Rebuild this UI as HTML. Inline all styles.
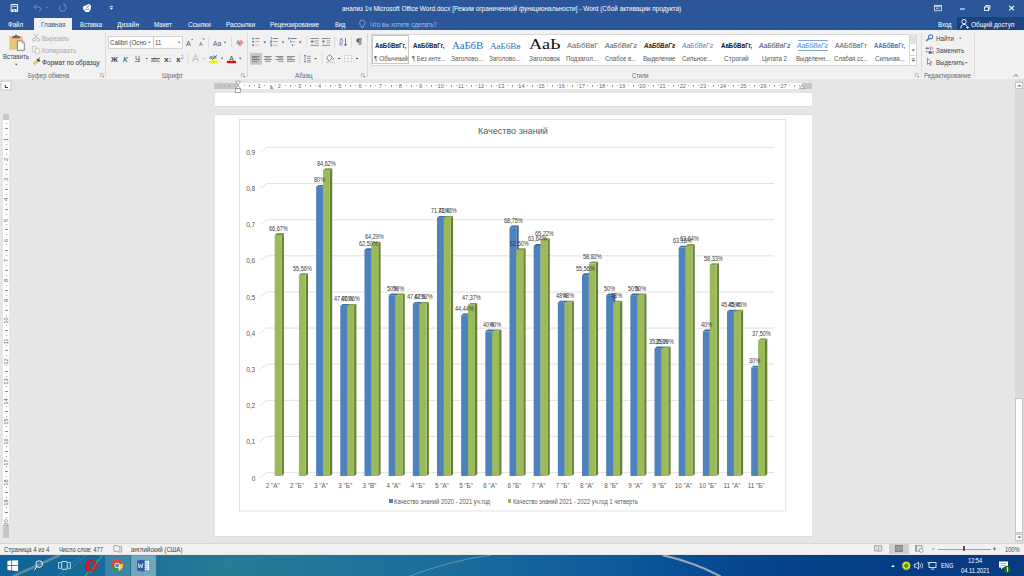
<!DOCTYPE html><html><head><meta charset="utf-8"><style>
html,body{margin:0;padding:0;width:1024px;height:576px;overflow:hidden;background:#e6e6e6}
.t{position:absolute;white-space:nowrap;transform-origin:0 0;font-family:"Liberation Sans",sans-serif}
.r{position:absolute}
</style></head><body>
<div class="r" style="left:0px;top:0px;width:1024px;height:30px;background:#2b579a;"></div>
<div class="r" style="left:0px;top:30px;width:1024px;height:49px;background:#f1f1f1;"></div>
<div class="r" style="left:0px;top:79px;width:1024px;height:464px;background:#e6e6e6;"></div>
<div class="r" style="left:0px;top:543px;width:1024px;height:11.4px;background:#f1f1f1;border-top:1px solid #d6d6d6;box-sizing:border-box;"></div>
<svg class="r" style="left:0;top:554.5px" width="1024" height="21.5" viewBox="0 554.5 1024 21.5">
<defs><linearGradient id="tbg" x1="0" y1="0" x2="1024" y2="0" gradientUnits="userSpaceOnUse"><stop offset="0" stop-color="#0f6399"/><stop offset="0.1" stop-color="#176c98"/><stop offset="0.22" stop-color="#277b95"/><stop offset="0.33" stop-color="#20759a"/><stop offset="0.45" stop-color="#1a6b9c"/><stop offset="0.55" stop-color="#13609d"/><stop offset="0.63" stop-color="#0b5499"/><stop offset="0.7" stop-color="#054a92"/><stop offset="0.8" stop-color="#043f88"/><stop offset="1" stop-color="#073a80"/></linearGradient></defs>
<rect x="0" y="554.5" width="1024" height="21.5" fill="url(#tbg)"/>
<path d="M13 576 L60 554.5" stroke="#b9b894" stroke-width="2.6" opacity="0.45"/>
<path d="M57 576 L80 556 M62 576 L86 555" stroke="#8fc0c0" stroke-width="0.6" opacity="0.5"/>
<path d="M84.6 576 L102.6 554.7" stroke="#7fbf6a" stroke-width="1.1" opacity="0.7"/>
<path d="M408.8 576 Q450 560 490.5 554.7" stroke="#8fb4b8" stroke-width="1" fill="none" opacity="0.6"/>
<path d="M662.6 554.7 Q695 562 720.6 576" stroke="#b4b8bc" stroke-width="2.2" fill="none" opacity="0.85"/>
<path d="M195 576 Q230 555 300 556 Q360 556 330 576" stroke="#4a95a8" stroke-width="1.2" fill="none" opacity="0.18"/>
<rect x="105.2" y="554.7" width="24.8" height="21.3" fill="#ffffff" opacity="0.16"/>
<rect x="131" y="554.7" width="24.9" height="21.3" fill="#ffffff" opacity="0.38" stroke="#cde3ea" stroke-width="0.6" stroke-opacity="0.5"/>
<path d="M7.4 560.6 L11.4 560.1 V564.6 H7.4Z M12.1 560 L18.1 559.8 V564.6 H12.1Z M7.4 565.3 H11.4 V570 L7.4 569.5Z M12.1 565.3 H18.1 V570.75 L12.1 570.1Z" fill="#fff"/>
<circle cx="39.2" cy="563.6" r="3.3" fill="none" stroke="#fff" stroke-width="0.9"/><path d="M36.9 566 L34.3 569.6" stroke="#fff" stroke-width="1"/>
<rect x="61.7" y="561" width="5.5" height="7.8" rx="0.6" fill="none" stroke="#fff" stroke-width="0.8"/><path d="M60.8 562 H58.6 V567.8 H60.8 M68.1 562 H70.3 V567.8 H68.1" fill="none" stroke="#fff" stroke-width="0.7"/>
<ellipse cx="91" cy="565.3" rx="6" ry="6" fill="#e3131c"/><ellipse cx="91" cy="565.3" rx="2.3" ry="4.1" fill="#1a6a8e"/><path d="M89 571 Q85 569 85.2 565" stroke="#a00c12" stroke-width="0.8" fill="none" opacity="0.6"/><path d="M89.6 574 L96.4 563" stroke="#7fbf6a" stroke-width="0.9" opacity="0.55"/>
<circle cx="117.2" cy="564.9" r="5.8" fill="#dd4b39"/><path d="M117.2 564.9 L111.6 566.4 A5.8 5.8 0 0 0 119.1 570.4Z" fill="#1da462"/><path d="M117.2 564.9 L119.1 570.4 A5.8 5.8 0 0 0 122.6 562.8Z" fill="#ffcd40"/><path d="M117.2 564.9 L122.6 562.8 A5.8 5.8 0 0 0 117.2 559.1 A5.8 5.8 0 0 0 111.6 562.5Z" fill="#dd4b39"/><circle cx="117.2" cy="564.9" r="2.6" fill="#fff"/><circle cx="117.2" cy="564.9" r="2" fill="#4a8af4"/>
<rect x="143" y="560.6" width="6" height="9" fill="#fff"/><rect x="144.3" y="562" width="3.8" height="0.7" fill="#6b8fd0"/><rect x="144.3" y="564" width="3.8" height="0.7" fill="#6b8fd0"/><rect x="144.3" y="566" width="3.8" height="0.7" fill="#6b8fd0"/><rect x="144.3" y="568" width="3.8" height="0.7" fill="#6b8fd0"/>
<path d="M137.2 560 L144.7 559.3 V570.9 L137.2 570.2Z" fill="#2b5aa8"/><path d="M138.3 562.8 L139.2 567.4 L140.5 563.8 L141.8 567.4 L142.9 562.8" fill="none" stroke="#fff" stroke-width="0.8"/>
<path d="M891 566.4 L893 564.4 L895 566.4Z" fill="#fff"/>
<circle cx="906.3" cy="565.3" r="4.2" fill="#e8d620"/><path d="M906.3 562.6 L909 565.3 L906.3 568 L903.6 565.3Z" fill="#2aa040"/><path d="M903.2 568.2 A4.2 4.2 0 0 0 909.4 568.2" stroke="#3aa040" stroke-width="1" fill="none"/>
<path d="M914.3 563.8 H916 L918.6 561.6 V568.6 L916 566.6 H914.3Z" fill="none" stroke="#fff" stroke-width="0.8"/><path d="M920 563.3 Q921 565.1 920 566.9 M921.8 562.2 Q923.4 565.1 921.8 568" fill="none" stroke="#fff" stroke-width="0.7"/>
<rect x="929" y="562" width="7" height="5" fill="none" stroke="#fff" stroke-width="0.8"/><path d="M931 568.6 H934.5 M927.5 561.8 L929.5 563.8" stroke="#fff" stroke-width="0.8"/>
<path d="M999 561 H1008 V567 H1003 L1001 569 V567 H999Z" fill="#fff"/><rect x="1000.5" y="562.6" width="6" height="0.7" fill="#8aa0c0"/><rect x="1000.5" y="564.4" width="6" height="0.7" fill="#8aa0c0"/><circle cx="1007.2" cy="569.2" r="3.6" fill="#1d6b2e" stroke="#0f3f1c" stroke-width="0.4"/><path d="M1006.7 567.4 L1007.6 566.8 V571.4" stroke="#fff" stroke-width="0.9" fill="none"/>
</svg>
<div class="r" style="left:34px;top:17.5px;width:37.5px;height:12.5px;background:#f1f1f1;"></div>
<div class="t" style="left:341.70px;top:6.20px;font-size:6.6px;line-height:6.6px;color:#ffffff;font-weight:normal;font-style:normal;font-family:'Liberation Sans', sans-serif;transform:scaleX(0.9756);">анализ 1ч Microsoft Office Word.docx [Режим ограниченной функциональности] - Word (Сбой активации продукта)</div>
<div class="t" style="left:8.00px;top:22.20px;font-size:6.8px;line-height:6.8px;color:#ffffff;font-weight:normal;font-style:normal;font-family:'Liberation Sans', sans-serif;transform:scaleX(0.8973);">Файл</div>
<div class="t" style="left:80.00px;top:22.20px;font-size:6.8px;line-height:6.8px;color:#ffffff;font-weight:normal;font-style:normal;font-family:'Liberation Sans', sans-serif;transform:scaleX(0.8705);">Вставка</div>
<div class="t" style="left:117.00px;top:22.20px;font-size:6.8px;line-height:6.8px;color:#ffffff;font-weight:normal;font-style:normal;font-family:'Liberation Sans', sans-serif;transform:scaleX(0.9626);">Дизайн</div>
<div class="t" style="left:154.00px;top:22.20px;font-size:6.8px;line-height:6.8px;color:#ffffff;font-weight:normal;font-style:normal;font-family:'Liberation Sans', sans-serif;transform:scaleX(0.9354);">Макет</div>
<div class="t" style="left:187.75px;top:22.20px;font-size:6.8px;line-height:6.8px;color:#ffffff;font-weight:normal;font-style:normal;font-family:'Liberation Sans', sans-serif;transform:scaleX(0.9503);">Ссылки</div>
<div class="t" style="left:226.00px;top:22.20px;font-size:6.8px;line-height:6.8px;color:#ffffff;font-weight:normal;font-style:normal;font-family:'Liberation Sans', sans-serif;transform:scaleX(0.9502);">Рассылки</div>
<div class="t" style="left:270.00px;top:22.20px;font-size:6.8px;line-height:6.8px;color:#ffffff;font-weight:normal;font-style:normal;font-family:'Liberation Sans', sans-serif;transform:scaleX(0.9333);">Рецензирование</div>
<div class="t" style="left:334.90px;top:22.20px;font-size:6.8px;line-height:6.8px;color:#ffffff;font-weight:normal;font-style:normal;font-family:'Liberation Sans', sans-serif;transform:scaleX(0.8373);">Вид</div>
<div class="t" style="left:40.50px;top:22.20px;font-size:6.8px;line-height:6.8px;color:#2b579a;font-weight:normal;font-style:normal;font-family:'Liberation Sans', sans-serif;transform:scaleX(0.9466);">Главная</div>
<div class="t" style="left:370.00px;top:22.20px;font-size:6.8px;line-height:6.8px;color:#a9bcd9;font-weight:normal;font-style:normal;font-family:'Liberation Sans', sans-serif;transform:scaleX(0.8914);">Что вы хотите сделать?</div>
<div class="t" style="left:938.00px;top:22.20px;font-size:6.8px;line-height:6.8px;color:#ffffff;font-weight:normal;font-style:normal;font-family:'Liberation Sans', sans-serif;transform:scaleX(0.8842);">Вход</div>
<div class="r" style="left:957px;top:17.4px;width:67px;height:12.6px;background:#19427e;"></div>
<div class="t" style="left:970.60px;top:22.20px;font-size:6.8px;line-height:6.8px;color:#ffffff;font-weight:normal;font-style:normal;font-family:'Liberation Sans', sans-serif;transform:scaleX(0.9499);">Общий доступ</div>
<div class="t" style="left:27.75px;top:73.30px;font-size:6.6px;line-height:6.6px;color:#666;font-weight:normal;font-style:normal;font-family:'Liberation Sans', sans-serif;transform:scaleX(0.9199);">Буфер обмена</div>
<div class="t" style="left:162.00px;top:73.30px;font-size:6.6px;line-height:6.6px;color:#666;font-weight:normal;font-style:normal;font-family:'Liberation Sans', sans-serif;transform:scaleX(0.9671);">Шрифт</div>
<div class="t" style="left:294.90px;top:73.30px;font-size:6.6px;line-height:6.6px;color:#666;font-weight:normal;font-style:normal;font-family:'Liberation Sans', sans-serif;transform:scaleX(0.9452);">Абзац</div>
<div class="t" style="left:631.75px;top:73.30px;font-size:6.6px;line-height:6.6px;color:#666;font-weight:normal;font-style:normal;font-family:'Liberation Sans', sans-serif;transform:scaleX(0.8678);">Стили</div>
<div class="t" style="left:924.10px;top:73.30px;font-size:6.6px;line-height:6.6px;color:#666;font-weight:normal;font-style:normal;font-family:'Liberation Sans', sans-serif;transform:scaleX(0.9329);">Редактирование</div>
<div class="t" style="left:3.10px;top:53.90px;font-size:6.8px;line-height:6.8px;color:#444;font-weight:normal;font-style:normal;font-family:'Liberation Sans', sans-serif;transform:scaleX(0.8986);">Вставить</div>
<div class="t" style="left:42.25px;top:35.70px;font-size:6.8px;line-height:6.8px;color:#a6a6a6;font-weight:normal;font-style:normal;font-family:'Liberation Sans', sans-serif;transform:scaleX(0.8845);">Вырезать</div>
<div class="t" style="left:42.25px;top:47.80px;font-size:6.8px;line-height:6.8px;color:#a6a6a6;font-weight:normal;font-style:normal;font-family:'Liberation Sans', sans-serif;transform:scaleX(0.9355);">Копировать</div>
<div class="t" style="left:42.25px;top:60.00px;font-size:6.8px;line-height:6.8px;color:#333;font-weight:normal;font-style:normal;font-family:'Liberation Sans', sans-serif;transform:scaleX(0.9472);">Формат по образцу</div>
<div class="r" style="left:105.4px;top:33px;width:1px;height:44px;background:#dadada;"></div>
<div class="r" style="left:247.4px;top:33px;width:1px;height:44px;background:#dadada;"></div>
<div class="r" style="left:367.4px;top:33px;width:1px;height:44px;background:#dadada;"></div>
<div class="r" style="left:921.4px;top:33px;width:1px;height:44px;background:#dadada;"></div>
<div class="r" style="left:974px;top:33px;width:1px;height:44px;background:#dadada;"></div>
<svg class="r" style="left:0;top:0" width="1024" height="576">
<path d="M11.1 4.5 H17.6 V11.4 H11.1Z" fill="none" stroke="#fff" stroke-width="1"/>
<rect x="12.1" y="5.9" width="4.5" height="0.8" fill="#fff"/>
<rect x="12.2" y="9.1" width="4.3" height="2.3" fill="#fff"/><rect x="13.5" y="9.9" width="1.3" height="1.5" fill="#2b579a"/>
<path d="M34 7 L36.3 4.7 M34 7 L36.3 9.3 M34.2 7 H38.2 Q41 7 41 9.2 Q41 11 39 11.2" fill="none" stroke="#6f90c2" stroke-width="1"/>
<rect x="46" y="7.2" width="2" height="0.8" fill="#6f90c2"/>
<path d="M64.8 5.6 A3.3 3.3 0 1 1 60.2 5.9" fill="none" stroke="#6f90c2" stroke-width="1"/><path d="M62.7 4.2 H65.2 V6.7" fill="none" stroke="#6f90c2" stroke-width="0.9"/>
<path d="M83 8 Q83 5 86 5.5 L88.5 4 Q91 3.8 91 6.5 Q91.5 9 90 10 L89 12 H85.5 L84.8 10.6 Q82.8 10 83 8Z" fill="#fff"/>
<path d="M86.3 8 L89.5 5.2" stroke="#2b579a" stroke-width="0.8"/><path d="M85.4 9.4 H89" stroke="#2b579a" stroke-width="0.6"/>
<rect x="109.7" y="5.9" width="3.4" height="0.8" fill="#fff"/><path d="M109.6 7.8 H113.2 L111.4 9.8Z" fill="#fff"/>
<rect x="934.5" y="5.5" width="7" height="5.2" fill="none" stroke="#cfd9ea" stroke-width="0.9"/><rect x="934.5" y="5.5" width="7" height="1.2" fill="#cfd9ea"/><path d="M936.2 8.3 H939.6 M937.3 7.3 L936.2 8.3 L937.3 9.3" stroke="#cfd9ea" stroke-width="0.7" fill="none"/>
<rect x="959.9" y="8.5" width="5.1" height="1" fill="#fff"/>
<rect x="984.4" y="7" width="4.2" height="3.6" fill="none" stroke="#fff" stroke-width="0.9"/><path d="M985.8 7 V5.6 H989.8 V9.2 H988.6" fill="none" stroke="#fff" stroke-width="0.9"/>
<path d="M1009.2 5.8 L1014 10.4 M1014 5.8 L1009.2 10.4" stroke="#fff" stroke-width="1.1"/>
<path d="M361.3 26 Q359.6 24.6 359.6 22.8 A2.7 2.7 0 0 1 365 22.8 Q365 24.6 363.3 26 V27.3 H361.3Z" fill="none" stroke="#a9bcd9" stroke-width="0.7"/>
<circle cx="964" cy="21.6" r="2.2" fill="none" stroke="#fff" stroke-width="0.9"/><path d="M960.6 28.3 Q961 24.6 964 24.4 Q966 24.4 967 25.8" fill="none" stroke="#fff" stroke-width="0.9"/><path d="M966.2 27.5 H969 M967.6 26.1 V28.9" stroke="#fff" stroke-width="0.8"/>
<path d="M9.4 36 H22.6 V48.8 Q22.6 49.8 21.6 49.8 H10.4 Q9.4 49.8 9.4 48.8Z" fill="#ebc677"/>
<path d="M12.2 38.3 H20.1 V37 Q20.1 36 19 36 H17.6 Q17.6 34.4 16.15 34.4 Q14.7 34.4 14.7 36 H13.3 Q12.2 36 12.2 37Z" fill="#6b6b6b"/>
<path d="M17.4 40.8 H22.3 L24.3 42.8 V50.4 H17.4Z" fill="#fff" stroke="#6b6b6b" stroke-width="0.8"/><path d="M22.2 40.8 V42.9 H24.3" fill="none" stroke="#6b6b6b" stroke-width="0.6"/>
<path d="M14.90 63.85 H17.70 L16.30 65.45Z" fill="#555"/>
<circle cx="33.9" cy="39.8" r="1.5" fill="none" stroke="#b3b3b3" stroke-width="0.8"/><circle cx="38.3" cy="39.8" r="1.5" fill="none" stroke="#b3b3b3" stroke-width="0.8"/><path d="M34.6 38.5 L38.5 33.8 M37.6 38.5 L33.7 33.8" stroke="#b3b3b3" stroke-width="0.8"/>
<path d="M32.4 46.3 H35.9 L36.9 47.3 V51.6 H32.4Z" fill="#f4f4f4" stroke="#b8b8b8" stroke-width="0.7"/><path d="M35.2 48.4 H38.7 L39.8 49.4 V53.4 H35.2Z" fill="#f4f4f4" stroke="#b8b8b8" stroke-width="0.7"/>
<path d="M32.6 63.3 L36.3 59.8 L38.4 62 L34.8 65.6Z" fill="#ebc677"/><path d="M36.3 59.8 L38.2 58.6 L40.4 60.7 L38.4 62Z" fill="#444"/><path d="M38.6 58.9 L40 57.8" stroke="#444" stroke-width="0.9"/>
<rect x="108.5" y="36.5" width="45" height="11.8" fill="#fff" stroke="#c6c6c6" stroke-width="0.8"/>
<rect x="153.6" y="36.5" width="28.9" height="11.8" fill="#fff" stroke="#c6c6c6" stroke-width="0.8"/>
<path d="M148.00 41.65 H150.80 L149.40 43.25Z" fill="#666"/><path d="M177.70 41.65 H180.50 L179.10 43.25Z" fill="#666"/>
<path d="M191 39.9 L192.2 38.7 L193.4 39.9Z" fill="#3f7bc1"/><path d="M202.30 38.45 H205.10 L203.70 40.05Z" fill="#3f7bc1"/>
<path d="M223.60 41.75 H226.40 L225.00 43.35Z" fill="#666"/>
<rect x="208.4" y="36.4" width="0.8" height="11.0" fill="#d4d4d4"/>
<rect x="231.3" y="36.4" width="0.8" height="11.0" fill="#d4d4d4"/>
<rect x="187.5" y="53.2" width="0.8" height="10.599999999999994" fill="#d4d4d4"/>
<rect x="306.4" y="36.4" width="0.8" height="11.200000000000003" fill="#d4d4d4"/>
<rect x="334.2" y="36.4" width="0.8" height="11.200000000000003" fill="#d4d4d4"/>
<rect x="351.3" y="36.4" width="0.8" height="11.200000000000003" fill="#d4d4d4"/>
<rect x="299.4" y="53" width="0.8" height="11" fill="#d4d4d4"/>
<rect x="321.7" y="53" width="0.8" height="11" fill="#d4d4d4"/>
<path d="M237 44 L241 39.8 L243.8 42.4 L239.8 46.6Z" fill="#e98ea2"/>
<rect x="134.8" y="61.2" width="5.2" height="0.7" fill="#555"/>
<path d="M145.30 57.95 H148.10 L146.70 59.55Z" fill="#666"/><path d="M202.30 57.95 H205.10 L203.70 59.55Z" fill="#bbb"/><path d="M220.65 57.75 H223.45 L222.05 59.35Z" fill="#555"/><path d="M238.85 57.75 H241.65 L240.25 59.35Z" fill="#555"/>
<rect x="151.3" y="58.3" width="8.7" height="0.7" fill="#555"/>
<rect x="209" y="60.7" width="9" height="2.4" fill="#f5f500"/><rect x="226.8" y="60.9" width="9.2" height="2.2" fill="#f00"/>
<path d="M212 60 L216.8 55.2" stroke="#555" stroke-width="0.9"/>
<path d="M192.4 61.6 L195.5 55 L198.6 61.6 M193.6 59.3 H197.4" fill="none" stroke="#c4c4c4" stroke-width="1.2"/>
<rect x="252.2" y="37.800000000000004" width="1.7" height="1.7" fill="#4a80c0"/><rect x="255.2" y="38.25" width="4.2" height="0.7" fill="#555"/>
<rect x="272.8" y="38.25" width="5.1" height="0.7" fill="#555"/>
<rect x="252.2" y="40.900000000000006" width="1.7" height="1.7" fill="#4a80c0"/><rect x="255.2" y="41.35" width="4.2" height="0.7" fill="#888"/>
<rect x="272.8" y="41.35" width="5.1" height="0.7" fill="#888"/>
<rect x="252.2" y="44.300000000000004" width="1.7" height="1.7" fill="#4a80c0"/><rect x="255.2" y="44.75" width="4.2" height="0.7" fill="#aaa"/>
<rect x="272.8" y="44.75" width="5.1" height="0.7" fill="#aaa"/>
<path d="M270.3 37.6 H271.6 V39.6 M270.3 40.8 H271.7 V41.8 H270.4 V42.8 H271.8 M270.3 44 H271.7 V46 H270.3 M270.6 45 H271.6" fill="none" stroke="#4a80c0" stroke-width="0.75"/>
<path d="M288.2 37.5 H289.5 V39.5 H288.2Z M290.2 40.8 H291.4 V42.5 H290.2Z M292 44.2 H293 V46 H292Z" fill="#4a80c0"/><rect x="290.2" y="38.3" width="6.5" height="0.7" fill="#555"/><rect x="292.2" y="41.4" width="3" height="0.7" fill="#888"/><rect x="293.6" y="44.8" width="1.5" height="0.7" fill="#aaa"/>
<path d="M263.4 41.6 H266.2 L264.8 43.2Z" fill="#555"/>
<path d="M281.59999999999997 41.6 H284.4 L283.0 43.2Z" fill="#555"/>
<path d="M298.79999999999995 41.6 H301.59999999999997 L300.2 43.2Z" fill="#555"/>
<rect x="310.3" y="38.2" width="8.5" height="0.8" fill="#777"/><rect x="314.8" y="40.4" width="4" height="0.8" fill="#999"/><rect x="314.8" y="42.6" width="4" height="0.8" fill="#999"/><rect x="310.3" y="44.9" width="8.5" height="0.8" fill="#777"/>
<rect x="321.9" y="38.2" width="8.5" height="0.8" fill="#777"/><rect x="326.4" y="40.4" width="4" height="0.8" fill="#999"/><rect x="326.4" y="42.6" width="4" height="0.8" fill="#999"/><rect x="321.9" y="44.9" width="8.5" height="0.8" fill="#777"/>
<path d="M310.5 41.6 L312.6 39.6 V43.6Z M312.5 41.2 H314.8 V42 H312.5Z" fill="#3f7bc1"/>
<path d="M325 41.6 L322.9 39.6 V43.6Z M322 41.2 H323.5 V42 H322Z" fill="#3f7bc1"/>
<path d="M339.7 41.7 L341.3 38 L342.9 41.7" fill="none" stroke="#4a80c0" stroke-width="0.8"/><path d="M340 45.8 V42.5 H342 Q342.6 42.5 342.6 43.4 Q342.6 44.2 342 44.2 H340 L342.5 45.8" fill="none" stroke="#a77bd0" stroke-width="0.8"/><path d="M345.5 38 V45.5 M344.2 44.2 L345.5 45.8 L346.8 44.2" fill="none" stroke="#555" stroke-width="0.8"/>
<path d="M359.1 38.8 V45 M360.8 38.8 V45 M361.9 38.8 H358.3 Q356.6 38.8 356.6 40.5 Q356.6 42.2 358.3 42.2 H359.1" fill="none" stroke="#666" stroke-width="0.9"/><path d="M358.3 38.8 Q356.6 38.8 356.6 40.5 Q356.6 42.2 358.3 42.2 H359.1 V38.8Z" fill="#666"/>
<rect x="250.2" y="52.9" width="11.7" height="11.9" fill="#c5c5c5"/>
<rect x="252.00" y="56.05" width="7.80" height="0.75" fill="#6a6a6a"/>
<rect x="252.00" y="57.55" width="5.46" height="0.75" fill="#6a6a6a"/>
<rect x="252.00" y="59.15" width="7.80" height="0.75" fill="#6a6a6a"/>
<rect x="252.00" y="60.85" width="5.46" height="0.75" fill="#6a6a6a"/>
<rect x="263.90" y="56.05" width="7.80" height="0.75" fill="#6a6a6a"/>
<rect x="265.07" y="57.55" width="5.46" height="0.75" fill="#6a6a6a"/>
<rect x="263.90" y="59.15" width="7.80" height="0.75" fill="#6a6a6a"/>
<rect x="265.07" y="60.85" width="5.46" height="0.75" fill="#6a6a6a"/>
<rect x="275.50" y="56.05" width="7.80" height="0.75" fill="#6a6a6a"/>
<rect x="277.84" y="57.55" width="5.46" height="0.75" fill="#6a6a6a"/>
<rect x="275.50" y="59.15" width="7.80" height="0.75" fill="#6a6a6a"/>
<rect x="277.84" y="60.85" width="5.46" height="0.75" fill="#6a6a6a"/>
<rect x="287.00" y="56.05" width="7.80" height="0.75" fill="#6a6a6a"/>
<rect x="287.00" y="57.55" width="5.46" height="0.75" fill="#6a6a6a"/>
<rect x="287.00" y="59.15" width="7.80" height="0.75" fill="#6a6a6a"/>
<rect x="287.00" y="60.85" width="7.80" height="0.75" fill="#6a6a6a"/>
<path d="M305 54.6 L303.7 56 H306.3Z M305 62.7 L303.7 61.3 H306.3Z" fill="#3f7bc1"/><rect x="304.7" y="55.6" width="0.7" height="6" fill="#3f7bc1"/>
<rect x="307" y="55.85" width="3.9" height="0.7" fill="#777"/>
<rect x="307" y="57.85" width="3.9" height="0.7" fill="#777"/>
<rect x="307" y="59.85" width="3.9" height="0.7" fill="#777"/>
<rect x="307" y="61.65" width="3.9" height="0.7" fill="#777"/>
<path d="M314.15 58.00 H316.95 L315.55 59.60Z M337.65 58.00 H340.45 L339.05 59.60Z M355.65 58.00 H358.45 L357.05 59.60Z" fill="#555"/>
<path d="M328.2 60.4 L326.8 57.6 L329.6 54.6 L332.4 57.4 L329.6 60.6Z" fill="#fff" stroke="#555" stroke-width="0.7"/><path d="M333.2 57.2 Q334.2 58.6 333.2 60.2 Q332.4 58.6 333.2 57.2Z" fill="#3f7bc1"/><rect x="326" y="61.8" width="9" height="0.9" fill="#c8c8c8"/>
<rect x="344.5" y="55.3" width="7" height="6.4" fill="#fff" stroke="#cfcfcf" stroke-width="0.8"/><path d="M348 55.3 V61.7 M344.5 58.5 H351.5" stroke="#cfcfcf" stroke-width="0.8"/>
<path d="M100.4 76.8 V73.6 H103.6" fill="none" stroke="#999" stroke-width="0.6"/><path d="M101.7 75 L103.6 76.9 M103.6 75.6 V76.9 H102.3" fill="none" stroke="#777" stroke-width="0.6"/>
<path d="M241.4 76.8 V73.6 H244.6" fill="none" stroke="#999" stroke-width="0.6"/><path d="M242.7 75 L244.6 76.9 M244.6 75.6 V76.9 H243.3" fill="none" stroke="#777" stroke-width="0.6"/>
<path d="M361.4 76.8 V73.6 H364.6" fill="none" stroke="#999" stroke-width="0.6"/><path d="M362.7 75 L364.6 76.9 M364.6 75.6 V76.9 H363.3" fill="none" stroke="#777" stroke-width="0.6"/>
<path d="M915.4 76.8 V73.6 H918.6" fill="none" stroke="#999" stroke-width="0.6"/><path d="M916.7 75 L918.6 76.9 M918.6 75.6 V76.9 H917.3" fill="none" stroke="#777" stroke-width="0.6"/>
<path d="M1013.8 76.6 L1015.8 74.5 L1017.8 76.6" fill="none" stroke="#555" stroke-width="0.9"/>
</svg>
<div class="t" style="left:109.90px;top:38.60px;font-size:7.0px;line-height:7.0px;color:#444;font-weight:normal;font-style:normal;font-family:'Liberation Sans', sans-serif;transform:scaleX(0.8894);">Calibri (Осно</div>
<div class="t" style="left:155.20px;top:38.60px;font-size:7.0px;line-height:7.0px;color:#444;font-weight:normal;font-style:normal;font-family:'Liberation Sans', sans-serif;transform:scaleX(0.8533);">11</div>
<div class="t" style="left:110.60px;top:55.60px;font-size:7.0px;line-height:7.0px;color:#444;font-weight:bold;font-style:normal;font-family:'Liberation Sans', sans-serif;transform:scaleX(1.0591);">Ж</div>
<div class="t" style="left:123.10px;top:55.60px;font-size:7.0px;line-height:7.0px;color:#444;font-weight:normal;font-style:italic;font-family:'Liberation Sans', sans-serif;transform:scaleX(1.1392);">К</div>
<div class="t" style="left:134.90px;top:56.30px;font-size:6.6px;line-height:6.6px;color:#444;font-weight:normal;font-style:normal;font-family:'Liberation Sans', sans-serif;transform:scaleX(1.1365);">Ч</div>
<div class="t" style="left:151.30px;top:56.80px;font-size:6.6px;line-height:6.6px;color:#555;font-weight:normal;font-style:normal;font-family:'Liberation Sans', sans-serif;transform:scaleX(0.8082);">abc</div>
<div class="t" style="left:164.20px;top:55.80px;font-size:7px;line-height:7px;color:#444;font-weight:bold;font-style:normal;font-family:'Liberation Sans', sans-serif;transform:scaleX(1.1817);">x</div>
<div class="t" style="left:168.80px;top:59.11px;font-size:4.5px;line-height:4.5px;color:#3f7bc1;font-weight:normal;font-style:normal;font-family:'Liberation Sans', sans-serif;transform:scaleX(0.8791);">2</div>
<div class="t" style="left:175.90px;top:55.80px;font-size:7px;line-height:7px;color:#444;font-weight:bold;font-style:normal;font-family:'Liberation Sans', sans-serif;transform:scaleX(1.1817);">x</div>
<div class="t" style="left:180.50px;top:55.51px;font-size:4.5px;line-height:4.5px;color:#3f7bc1;font-weight:normal;font-style:normal;font-family:'Liberation Sans', sans-serif;transform:scaleX(0.8791);">2</div>
<div class="t" style="left:186.20px;top:39.60px;font-size:7.6px;line-height:7.6px;color:#555;font-weight:normal;font-style:normal;font-family:'Liberation Sans', sans-serif;transform:scaleX(0.9469);">A</div>
<div class="t" style="left:198.80px;top:41.99px;font-size:5.6px;line-height:5.6px;color:#555;font-weight:normal;font-style:normal;font-family:'Liberation Sans', sans-serif;transform:scaleX(0.9370);">A</div>
<div class="t" style="left:212.80px;top:39.50px;font-size:7.2px;line-height:7.2px;color:#555;font-weight:normal;font-style:normal;font-family:'Liberation Sans', sans-serif;transform:scaleX(0.9311);">Aa</div>
<div class="t" style="left:235.70px;top:39.89px;font-size:5.6px;line-height:5.6px;color:#666;font-weight:normal;font-style:normal;font-family:'Liberation Sans', sans-serif;transform:scaleX(1.0173);">A</div>
<div class="t" style="left:209.00px;top:55.21px;font-size:5px;line-height:5px;color:#555;font-weight:normal;font-style:italic;font-family:'Liberation Sans', sans-serif;transform:scaleX(1.3487);">ab</div>
<div class="t" style="left:229.20px;top:55.10px;font-size:7.2px;line-height:7.2px;color:#444;font-weight:normal;font-style:normal;font-family:'Liberation Sans', sans-serif;transform:scaleX(1.0203);">A</div>
<div class="r" style="left:370.75px;top:33.6px;width:546.5px;height:32.3px;background:#ffffff;border:0.7px solid #d6d6d6;box-sizing:border-box"></div>
<div class="r" style="left:909.2px;top:33.6px;width:8px;height:32.3px;background:#f4f4f4;border:0.7px solid #d6d6d6;box-sizing:border-box"></div>
<div class="r" style="left:909.9px;top:34.3px;width:6.6px;height:10.2px;background:#e3e3e3;"></div>
<div class="r" style="left:909.9px;top:44.6px;width:6.6px;height:0.7px;background:#d6d6d6;"></div>
<div class="r" style="left:909.9px;top:55.4px;width:6.6px;height:0.7px;background:#d6d6d6;"></div>
<div class="r" style="left:909.9px;top:45.3px;width:6.6px;height:10.1px;background:#ffffff;"></div>
<div class="r" style="left:909.9px;top:56.1px;width:6.6px;height:8.5px;background:#ffffff;"></div>
<svg class="r" style="left:0;top:0" width="1024" height="576"><path d="M912.3 40.2 L913.3 39.3 L914.3 40.2" stroke="#c4c4c4" stroke-width="0.6" fill="none"/><path d="M911.6 49.4 H915 L913.3 51.3Z" fill="#555"/><rect x="911.6" y="58.5" width="3.4" height="0.7" fill="#555"/><path d="M911.6 59.9 H915 L913.3 61.8Z" fill="#555"/></svg>
<div class="r" style="left:371.5px;top:35.25px;width:37.5px;height:28.75px;background:transparent;border:1.6px solid #c6c6c6;box-sizing:border-box"></div>
<div class="t" style="left:374.90px;top:43.20px;font-size:6.6px;line-height:6.6px;color:#222;font-weight:bold;font-style:normal;font-family:'Liberation Sans', sans-serif;transform:scaleX(0.9173);">АаБбВвГг,</div>
<div class="t" style="left:373.60px;top:55.90px;font-size:6.6px;line-height:6.6px;color:#555;font-weight:normal;font-style:normal;font-family:'Liberation Sans', sans-serif;transform:scaleX(0.9783);">¶ Обычный</div>
<div class="t" style="left:413.00px;top:43.20px;font-size:6.6px;line-height:6.6px;color:#222;font-weight:bold;font-style:normal;font-family:'Liberation Sans', sans-serif;transform:scaleX(0.9291);">АаБбВвГг,</div>
<div class="t" style="left:412.00px;top:55.90px;font-size:6.6px;line-height:6.6px;color:#555;font-weight:normal;font-style:normal;font-family:'Liberation Sans', sans-serif;transform:scaleX(0.8989);">¶ Без инте...</div>
<div class="t" style="left:451.50px;top:40.20px;font-size:11px;line-height:11px;color:#2e74b5;font-weight:normal;font-style:normal;font-family:'Liberation Serif', serif;transform:scaleX(0.9786);">АаБбВ</div>
<div class="t" style="left:450.75px;top:55.90px;font-size:6.6px;line-height:6.6px;color:#555;font-weight:normal;font-style:normal;font-family:'Liberation Sans', sans-serif;transform:scaleX(0.9661);">Заголово...</div>
<div class="t" style="left:489.90px;top:42.60px;font-size:8px;line-height:8px;color:#2e74b5;font-weight:normal;font-style:normal;font-family:'Liberation Serif', serif;transform:scaleX(1.1333);">АаБбВв</div>
<div class="t" style="left:489.25px;top:55.90px;font-size:6.6px;line-height:6.6px;color:#555;font-weight:normal;font-style:normal;font-family:'Liberation Sans', sans-serif;transform:scaleX(0.9438);">Заголово...</div>
<div class="t" style="left:528.60px;top:36.80px;font-size:15px;line-height:15px;color:#111;font-weight:normal;font-style:normal;font-family:'Liberation Serif', serif;transform:scaleX(1.2216);">АаЬ</div>
<div class="t" style="left:528.60px;top:55.90px;font-size:6.6px;line-height:6.6px;color:#555;font-weight:normal;font-style:normal;font-family:'Liberation Sans', sans-serif;transform:scaleX(0.9959);">Заголовок</div>
<div class="t" style="left:566.75px;top:43.20px;font-size:6.6px;line-height:6.6px;color:#666;font-weight:normal;font-style:normal;font-family:'Liberation Sans', sans-serif;transform:scaleX(1.1265);">АаБбВвГ</div>
<div class="t" style="left:566.00px;top:55.90px;font-size:6.6px;line-height:6.6px;color:#555;font-weight:normal;font-style:normal;font-family:'Liberation Sans', sans-serif;transform:scaleX(0.9425);">Подзагол...</div>
<div class="t" style="left:604.90px;top:43.20px;font-size:6.6px;line-height:6.6px;color:#555;font-weight:normal;font-style:italic;font-family:'Liberation Sans', sans-serif;transform:scaleX(1.0350);">АаБбВвГг</div>
<div class="t" style="left:604.90px;top:55.90px;font-size:6.6px;line-height:6.6px;color:#555;font-weight:normal;font-style:normal;font-family:'Liberation Sans', sans-serif;transform:scaleX(0.9081);">Слабое в...</div>
<div class="t" style="left:643.60px;top:43.20px;font-size:6.6px;line-height:6.6px;color:#222;font-weight:bold;font-style:italic;font-family:'Liberation Sans', sans-serif;transform:scaleX(0.9315);">АаБбВвГг</div>
<div class="t" style="left:642.75px;top:55.90px;font-size:6.6px;line-height:6.6px;color:#555;font-weight:normal;font-style:normal;font-family:'Liberation Sans', sans-serif;transform:scaleX(0.9293);">Выделение</div>
<div class="t" style="left:682.00px;top:43.20px;font-size:6.6px;line-height:6.6px;color:#4a86c8;font-weight:normal;font-style:italic;font-family:'Liberation Sans', sans-serif;transform:scaleX(1.0074);">АаБбВвГг</div>
<div class="t" style="left:682.00px;top:55.90px;font-size:6.6px;line-height:6.6px;color:#555;font-weight:normal;font-style:normal;font-family:'Liberation Sans', sans-serif;transform:scaleX(0.9309);">Сильное...</div>
<div class="t" style="left:720.60px;top:43.20px;font-size:6.6px;line-height:6.6px;color:#111;font-weight:bold;font-style:normal;font-family:'Liberation Sans', sans-serif;transform:scaleX(0.9232);">АаБбВвГг,</div>
<div class="t" style="left:723.75px;top:55.90px;font-size:6.6px;line-height:6.6px;color:#555;font-weight:normal;font-style:normal;font-family:'Liberation Sans', sans-serif;transform:scaleX(0.9936);">Строгий</div>
<div class="t" style="left:758.75px;top:43.20px;font-size:6.6px;line-height:6.6px;color:#444;font-weight:normal;font-style:italic;font-family:'Liberation Sans', sans-serif;transform:scaleX(1.0155);">АаБбВвГг</div>
<div class="t" style="left:761.90px;top:55.90px;font-size:6.6px;line-height:6.6px;color:#555;font-weight:normal;font-style:normal;font-family:'Liberation Sans', sans-serif;transform:scaleX(0.9203);">Цитата 2</div>
<div class="t" style="left:797.25px;top:43.20px;font-size:6.6px;line-height:6.6px;color:#4a86c8;font-weight:normal;font-style:italic;font-family:'Liberation Sans', sans-serif;transform:scaleX(0.9992);">АаБбВвГг</div>
<div class="t" style="left:795.60px;top:55.90px;font-size:6.6px;line-height:6.6px;color:#555;font-weight:normal;font-style:normal;font-family:'Liberation Sans', sans-serif;transform:scaleX(0.9290);">Выделенн...</div>
<div class="t" style="left:835.10px;top:43.20px;font-size:6.6px;line-height:6.6px;color:#555;font-weight:normal;font-style:normal;font-family:'Liberation Sans', sans-serif;transform:scaleX(1.0355);">ААБбВвГг</div>
<div class="t" style="left:833.90px;top:55.90px;font-size:6.6px;line-height:6.6px;color:#555;font-weight:normal;font-style:normal;font-family:'Liberation Sans', sans-serif;transform:scaleX(0.9260);">Слабая сс...</div>
<div class="t" style="left:873.90px;top:43.20px;font-size:6.6px;line-height:6.6px;color:#3b78c4;font-weight:bold;font-style:normal;font-family:'Liberation Sans', sans-serif;transform:scaleX(0.8906);">ААБбВвГг,</div>
<div class="t" style="left:874.50px;top:55.90px;font-size:6.6px;line-height:6.6px;color:#555;font-weight:normal;font-style:normal;font-family:'Liberation Sans', sans-serif;transform:scaleX(0.9259);">Сильная...</div>
<div class="r" style="left:797.5px;top:40.2px;width:30.5px;height:0.8px;background:#7aa7dc;"></div>
<div class="r" style="left:797.5px;top:50.2px;width:30.5px;height:0.8px;background:#7aa7dc;"></div>
<svg class="r" style="left:0;top:0" width="1024" height="576"><circle cx="930.6" cy="36.8" r="2.1" fill="none" stroke="#3f7bc1" stroke-width="1.1"/><path d="M929.1 38.4 L926.1 40.9" stroke="#3f7bc1" stroke-width="1.4"/><path d="M959.00 37.50 H961.80 L960.40 39.10Z" fill="#777"/><path d="M964.90 62.10 H967.70 L966.30 63.70Z" fill="#777"/><path d="M927.5 58.3 V64.4 L929 63 L930.2 65.6 L931.2 65.1 L930 62.6 H932.1Z" fill="#fff" stroke="#666" stroke-width="0.7"/><path d="M930.5 46.8 L933.3 48.4 L930.5 50Z" fill="none" stroke="#a77bd0" stroke-width="0.8"/><rect x="925.6" y="47.5" width="3.6" height="1.6" fill="#777"/><path d="M925.4 51 L926.6 52.4 L927.8 51" fill="none" stroke="#3f7bc1" stroke-width="0.7"/><rect x="928.6" y="51.2" width="3" height="2.4" fill="#555"/><path d="M933.8 51.5 Q932.2 51.3 932.2 52.6 Q932.2 53.9 933.8 53.7" fill="none" stroke="#3f7bc1" stroke-width="0.7"/></svg>
<div class="t" style="left:935.60px;top:35.60px;font-size:6.8px;line-height:6.8px;color:#444;font-weight:normal;font-style:normal;font-family:'Liberation Sans', sans-serif;transform:scaleX(0.9225);">Найти</div>
<div class="t" style="left:935.60px;top:47.80px;font-size:6.8px;line-height:6.8px;color:#444;font-weight:normal;font-style:normal;font-family:'Liberation Sans', sans-serif;transform:scaleX(0.9229);">Заменить</div>
<div class="t" style="left:935.60px;top:59.80px;font-size:6.8px;line-height:6.8px;color:#444;font-weight:normal;font-style:normal;font-family:'Liberation Sans', sans-serif;transform:scaleX(0.8990);">Выделить</div>
<div class="r" style="left:214px;top:83px;width:24.6px;height:5.5px;background:#c6c6c6;"></div>
<div class="r" style="left:238.6px;top:83px;width:563.3px;height:5.5px;background:#ffffff;"></div>
<div class="r" style="left:801.9px;top:83px;width:10.4px;height:5.5px;background:#c6c6c6;"></div>
<div class="t" style="left:257.61px;top:84.29px;font-size:5.6px;line-height:5.6px;color:#666;font-weight:normal;font-style:normal;font-family:'Liberation Sans', sans-serif;transform:scaleX(1.0000);">1</div>
<div class="t" style="left:277.78px;top:84.29px;font-size:5.6px;line-height:5.6px;color:#666;font-weight:normal;font-style:normal;font-family:'Liberation Sans', sans-serif;transform:scaleX(1.0000);">2</div>
<div class="t" style="left:297.95px;top:84.29px;font-size:5.6px;line-height:5.6px;color:#666;font-weight:normal;font-style:normal;font-family:'Liberation Sans', sans-serif;transform:scaleX(1.0000);">3</div>
<div class="t" style="left:318.12px;top:84.29px;font-size:5.6px;line-height:5.6px;color:#666;font-weight:normal;font-style:normal;font-family:'Liberation Sans', sans-serif;transform:scaleX(1.0000);">4</div>
<div class="t" style="left:338.29px;top:84.29px;font-size:5.6px;line-height:5.6px;color:#666;font-weight:normal;font-style:normal;font-family:'Liberation Sans', sans-serif;transform:scaleX(1.0000);">5</div>
<div class="t" style="left:358.46px;top:84.29px;font-size:5.6px;line-height:5.6px;color:#666;font-weight:normal;font-style:normal;font-family:'Liberation Sans', sans-serif;transform:scaleX(1.0000);">6</div>
<div class="t" style="left:378.63px;top:84.29px;font-size:5.6px;line-height:5.6px;color:#666;font-weight:normal;font-style:normal;font-family:'Liberation Sans', sans-serif;transform:scaleX(1.0000);">7</div>
<div class="t" style="left:398.80px;top:84.29px;font-size:5.6px;line-height:5.6px;color:#666;font-weight:normal;font-style:normal;font-family:'Liberation Sans', sans-serif;transform:scaleX(1.0000);">8</div>
<div class="t" style="left:418.97px;top:84.29px;font-size:5.6px;line-height:5.6px;color:#666;font-weight:normal;font-style:normal;font-family:'Liberation Sans', sans-serif;transform:scaleX(1.0000);">9</div>
<div class="t" style="left:437.59px;top:84.29px;font-size:5.6px;line-height:5.6px;color:#666;font-weight:normal;font-style:normal;font-family:'Liberation Sans', sans-serif;transform:scaleX(1.0000);">10</div>
<div class="t" style="left:457.96px;top:84.29px;font-size:5.6px;line-height:5.6px;color:#666;font-weight:normal;font-style:normal;font-family:'Liberation Sans', sans-serif;transform:scaleX(1.0000);">11</div>
<div class="t" style="left:477.93px;top:84.29px;font-size:5.6px;line-height:5.6px;color:#666;font-weight:normal;font-style:normal;font-family:'Liberation Sans', sans-serif;transform:scaleX(1.0000);">12</div>
<div class="t" style="left:498.10px;top:84.29px;font-size:5.6px;line-height:5.6px;color:#666;font-weight:normal;font-style:normal;font-family:'Liberation Sans', sans-serif;transform:scaleX(1.0000);">13</div>
<div class="t" style="left:518.27px;top:84.29px;font-size:5.6px;line-height:5.6px;color:#666;font-weight:normal;font-style:normal;font-family:'Liberation Sans', sans-serif;transform:scaleX(1.0000);">14</div>
<div class="t" style="left:538.44px;top:84.29px;font-size:5.6px;line-height:5.6px;color:#666;font-weight:normal;font-style:normal;font-family:'Liberation Sans', sans-serif;transform:scaleX(1.0000);">15</div>
<div class="t" style="left:558.61px;top:84.29px;font-size:5.6px;line-height:5.6px;color:#666;font-weight:normal;font-style:normal;font-family:'Liberation Sans', sans-serif;transform:scaleX(1.0000);">16</div>
<div class="t" style="left:578.78px;top:84.29px;font-size:5.6px;line-height:5.6px;color:#666;font-weight:normal;font-style:normal;font-family:'Liberation Sans', sans-serif;transform:scaleX(1.0000);">17</div>
<div class="t" style="left:598.95px;top:84.29px;font-size:5.6px;line-height:5.6px;color:#666;font-weight:normal;font-style:normal;font-family:'Liberation Sans', sans-serif;transform:scaleX(1.0000);">18</div>
<div class="t" style="left:619.12px;top:84.29px;font-size:5.6px;line-height:5.6px;color:#666;font-weight:normal;font-style:normal;font-family:'Liberation Sans', sans-serif;transform:scaleX(1.0000);">19</div>
<div class="t" style="left:639.29px;top:84.29px;font-size:5.6px;line-height:5.6px;color:#666;font-weight:normal;font-style:normal;font-family:'Liberation Sans', sans-serif;transform:scaleX(1.0000);">20</div>
<div class="t" style="left:659.46px;top:84.29px;font-size:5.6px;line-height:5.6px;color:#666;font-weight:normal;font-style:normal;font-family:'Liberation Sans', sans-serif;transform:scaleX(1.0000);">21</div>
<div class="t" style="left:679.63px;top:84.29px;font-size:5.6px;line-height:5.6px;color:#666;font-weight:normal;font-style:normal;font-family:'Liberation Sans', sans-serif;transform:scaleX(1.0000);">22</div>
<div class="t" style="left:699.80px;top:84.29px;font-size:5.6px;line-height:5.6px;color:#666;font-weight:normal;font-style:normal;font-family:'Liberation Sans', sans-serif;transform:scaleX(1.0000);">23</div>
<div class="t" style="left:719.97px;top:84.29px;font-size:5.6px;line-height:5.6px;color:#666;font-weight:normal;font-style:normal;font-family:'Liberation Sans', sans-serif;transform:scaleX(1.0000);">24</div>
<div class="t" style="left:740.14px;top:84.29px;font-size:5.6px;line-height:5.6px;color:#666;font-weight:normal;font-style:normal;font-family:'Liberation Sans', sans-serif;transform:scaleX(1.0000);">25</div>
<div class="t" style="left:760.31px;top:84.29px;font-size:5.6px;line-height:5.6px;color:#666;font-weight:normal;font-style:normal;font-family:'Liberation Sans', sans-serif;transform:scaleX(1.0000);">26</div>
<div class="t" style="left:780.48px;top:84.29px;font-size:5.6px;line-height:5.6px;color:#666;font-weight:normal;font-style:normal;font-family:'Liberation Sans', sans-serif;transform:scaleX(1.0000);">27</div>
<div class="r" style="left:244.0px;top:85.4px;width:0.8px;height:0.9px;background:#a4a4a4;"></div>
<div class="r" style="left:249.0px;top:84.6px;width:0.8px;height:2.4px;background:#9a9a9a;"></div>
<div class="r" style="left:254.0px;top:85.4px;width:0.8px;height:0.9px;background:#a4a4a4;"></div>
<div class="r" style="left:264.0px;top:85.4px;width:0.8px;height:0.9px;background:#a4a4a4;"></div>
<div class="r" style="left:269.5px;top:84.6px;width:0.8px;height:2.4px;background:#9a9a9a;"></div>
<div class="r" style="left:274.5px;top:85.4px;width:0.8px;height:0.9px;background:#a4a4a4;"></div>
<div class="r" style="left:284.5px;top:85.4px;width:0.8px;height:0.9px;background:#a4a4a4;"></div>
<div class="r" style="left:289.5px;top:84.6px;width:0.8px;height:2.4px;background:#9a9a9a;"></div>
<div class="r" style="left:294.5px;top:85.4px;width:0.8px;height:0.9px;background:#a4a4a4;"></div>
<div class="r" style="left:304.5px;top:85.4px;width:0.8px;height:0.9px;background:#a4a4a4;"></div>
<div class="r" style="left:309.5px;top:84.6px;width:0.8px;height:2.4px;background:#9a9a9a;"></div>
<div class="r" style="left:314.5px;top:85.4px;width:0.8px;height:0.9px;background:#a4a4a4;"></div>
<div class="r" style="left:324.5px;top:85.4px;width:0.8px;height:0.9px;background:#a4a4a4;"></div>
<div class="r" style="left:330.0px;top:84.6px;width:0.8px;height:2.4px;background:#9a9a9a;"></div>
<div class="r" style="left:335.0px;top:85.4px;width:0.8px;height:0.9px;background:#a4a4a4;"></div>
<div class="r" style="left:345.0px;top:85.4px;width:0.8px;height:0.9px;background:#a4a4a4;"></div>
<div class="r" style="left:350.0px;top:84.6px;width:0.8px;height:2.4px;background:#9a9a9a;"></div>
<div class="r" style="left:355.0px;top:85.4px;width:0.8px;height:0.9px;background:#a4a4a4;"></div>
<div class="r" style="left:365.0px;top:85.4px;width:0.8px;height:0.9px;background:#a4a4a4;"></div>
<div class="r" style="left:370.0px;top:84.6px;width:0.8px;height:2.4px;background:#9a9a9a;"></div>
<div class="r" style="left:375.0px;top:85.4px;width:0.8px;height:0.9px;background:#a4a4a4;"></div>
<div class="r" style="left:385.0px;top:85.4px;width:0.8px;height:0.9px;background:#a4a4a4;"></div>
<div class="r" style="left:390.5px;top:84.6px;width:0.8px;height:2.4px;background:#9a9a9a;"></div>
<div class="r" style="left:395.5px;top:85.4px;width:0.8px;height:0.9px;background:#a4a4a4;"></div>
<div class="r" style="left:405.5px;top:85.4px;width:0.8px;height:0.9px;background:#a4a4a4;"></div>
<div class="r" style="left:410.5px;top:84.6px;width:0.8px;height:2.4px;background:#9a9a9a;"></div>
<div class="r" style="left:415.5px;top:85.4px;width:0.8px;height:0.9px;background:#a4a4a4;"></div>
<div class="r" style="left:425.5px;top:85.4px;width:0.8px;height:0.9px;background:#a4a4a4;"></div>
<div class="r" style="left:430.5px;top:84.6px;width:0.8px;height:2.4px;background:#9a9a9a;"></div>
<div class="r" style="left:435.5px;top:85.4px;width:0.8px;height:0.9px;background:#a4a4a4;"></div>
<div class="r" style="left:445.5px;top:85.4px;width:0.8px;height:0.9px;background:#a4a4a4;"></div>
<div class="r" style="left:451.0px;top:84.6px;width:0.8px;height:2.4px;background:#9a9a9a;"></div>
<div class="r" style="left:456.0px;top:85.4px;width:0.8px;height:0.9px;background:#a4a4a4;"></div>
<div class="r" style="left:466.0px;top:85.4px;width:0.8px;height:0.9px;background:#a4a4a4;"></div>
<div class="r" style="left:471.0px;top:84.6px;width:0.8px;height:2.4px;background:#9a9a9a;"></div>
<div class="r" style="left:476.0px;top:85.4px;width:0.8px;height:0.9px;background:#a4a4a4;"></div>
<div class="r" style="left:486.0px;top:85.4px;width:0.8px;height:0.9px;background:#a4a4a4;"></div>
<div class="r" style="left:491.0px;top:84.6px;width:0.8px;height:2.4px;background:#9a9a9a;"></div>
<div class="r" style="left:496.0px;top:85.4px;width:0.8px;height:0.9px;background:#a4a4a4;"></div>
<div class="r" style="left:506.5px;top:85.4px;width:0.8px;height:0.9px;background:#a4a4a4;"></div>
<div class="r" style="left:511.5px;top:84.6px;width:0.8px;height:2.4px;background:#9a9a9a;"></div>
<div class="r" style="left:516.5px;top:85.4px;width:0.8px;height:0.9px;background:#a4a4a4;"></div>
<div class="r" style="left:526.5px;top:85.4px;width:0.8px;height:0.9px;background:#a4a4a4;"></div>
<div class="r" style="left:531.5px;top:84.6px;width:0.8px;height:2.4px;background:#9a9a9a;"></div>
<div class="r" style="left:536.5px;top:85.4px;width:0.8px;height:0.9px;background:#a4a4a4;"></div>
<div class="r" style="left:546.5px;top:85.4px;width:0.8px;height:0.9px;background:#a4a4a4;"></div>
<div class="r" style="left:551.5px;top:84.6px;width:0.8px;height:2.4px;background:#9a9a9a;"></div>
<div class="r" style="left:556.5px;top:85.4px;width:0.8px;height:0.9px;background:#a4a4a4;"></div>
<div class="r" style="left:567.0px;top:85.4px;width:0.8px;height:0.9px;background:#a4a4a4;"></div>
<div class="r" style="left:572.0px;top:84.6px;width:0.8px;height:2.4px;background:#9a9a9a;"></div>
<div class="r" style="left:577.0px;top:85.4px;width:0.8px;height:0.9px;background:#a4a4a4;"></div>
<div class="r" style="left:587.0px;top:85.4px;width:0.8px;height:0.9px;background:#a4a4a4;"></div>
<div class="r" style="left:592.0px;top:84.6px;width:0.8px;height:2.4px;background:#9a9a9a;"></div>
<div class="r" style="left:597.0px;top:85.4px;width:0.8px;height:0.9px;background:#a4a4a4;"></div>
<div class="r" style="left:607.0px;top:85.4px;width:0.8px;height:0.9px;background:#a4a4a4;"></div>
<div class="r" style="left:612.0px;top:84.6px;width:0.8px;height:2.4px;background:#9a9a9a;"></div>
<div class="r" style="left:617.0px;top:85.4px;width:0.8px;height:0.9px;background:#a4a4a4;"></div>
<div class="r" style="left:627.5px;top:85.4px;width:0.8px;height:0.9px;background:#a4a4a4;"></div>
<div class="r" style="left:632.5px;top:84.6px;width:0.8px;height:2.4px;background:#9a9a9a;"></div>
<div class="r" style="left:637.5px;top:85.4px;width:0.8px;height:0.9px;background:#a4a4a4;"></div>
<div class="r" style="left:647.5px;top:85.4px;width:0.8px;height:0.9px;background:#a4a4a4;"></div>
<div class="r" style="left:652.5px;top:84.6px;width:0.8px;height:2.4px;background:#9a9a9a;"></div>
<div class="r" style="left:657.5px;top:85.4px;width:0.8px;height:0.9px;background:#a4a4a4;"></div>
<div class="r" style="left:667.5px;top:85.4px;width:0.8px;height:0.9px;background:#a4a4a4;"></div>
<div class="r" style="left:672.5px;top:84.6px;width:0.8px;height:2.4px;background:#9a9a9a;"></div>
<div class="r" style="left:677.5px;top:85.4px;width:0.8px;height:0.9px;background:#a4a4a4;"></div>
<div class="r" style="left:688.0px;top:85.4px;width:0.8px;height:0.9px;background:#a4a4a4;"></div>
<div class="r" style="left:693.0px;top:84.6px;width:0.8px;height:2.4px;background:#9a9a9a;"></div>
<div class="r" style="left:698.0px;top:85.4px;width:0.8px;height:0.9px;background:#a4a4a4;"></div>
<div class="r" style="left:708.0px;top:85.4px;width:0.8px;height:0.9px;background:#a4a4a4;"></div>
<div class="r" style="left:713.0px;top:84.6px;width:0.8px;height:2.4px;background:#9a9a9a;"></div>
<div class="r" style="left:718.0px;top:85.4px;width:0.8px;height:0.9px;background:#a4a4a4;"></div>
<div class="r" style="left:728.0px;top:85.4px;width:0.8px;height:0.9px;background:#a4a4a4;"></div>
<div class="r" style="left:733.0px;top:84.6px;width:0.8px;height:2.4px;background:#9a9a9a;"></div>
<div class="r" style="left:738.0px;top:85.4px;width:0.8px;height:0.9px;background:#a4a4a4;"></div>
<div class="r" style="left:748.5px;top:85.4px;width:0.8px;height:0.9px;background:#a4a4a4;"></div>
<div class="r" style="left:753.5px;top:84.6px;width:0.8px;height:2.4px;background:#9a9a9a;"></div>
<div class="r" style="left:758.5px;top:85.4px;width:0.8px;height:0.9px;background:#a4a4a4;"></div>
<div class="r" style="left:768.5px;top:85.4px;width:0.8px;height:0.9px;background:#a4a4a4;"></div>
<div class="r" style="left:773.5px;top:84.6px;width:0.8px;height:2.4px;background:#9a9a9a;"></div>
<div class="r" style="left:778.5px;top:85.4px;width:0.8px;height:0.9px;background:#a4a4a4;"></div>
<div class="r" style="left:788.5px;top:85.4px;width:0.8px;height:0.9px;background:#a4a4a4;"></div>
<div class="r" style="left:793.5px;top:84.6px;width:0.8px;height:2.4px;background:#9a9a9a;"></div>
<div class="r" style="left:798.5px;top:85.4px;width:0.8px;height:0.9px;background:#a4a4a4;"></div>
<div class="r" style="left:233.9575px;top:85.4px;width:0.8px;height:0.9px;background:#a4a4a4;"></div>
<div class="r" style="left:228.915px;top:84.6px;width:0.8px;height:2.4px;background:#9a9a9a;"></div>
<div class="r" style="left:223.8725px;top:85.4px;width:0.8px;height:0.9px;background:#a4a4a4;"></div>
<div class="r" style="left:218.82999999999998px;top:85.4px;width:0.8px;height:0.9px;background:#a4a4a4;"></div>
<svg class="r" style="left:0;top:0" width="1024" height="576"><path d="M235.6 81.2 H240.6 L238.1 84.6Z" fill="#fff" stroke="#777" stroke-width="0.6"/><path d="M235.6 88.6 H240.6 L238.1 85.2Z" fill="#fff" stroke="#777" stroke-width="0.6"/><rect x="235.6" y="88.8" width="5" height="3.5" fill="#fff" stroke="#777" stroke-width="0.6"/><path d="M799.4 88.6 H804.4 L801.9 85.2Z" fill="#fff" stroke="#777" stroke-width="0.6"/><path d="M270 88.2 H273.6 M271.7 85.8 V88.2" stroke="#666" stroke-width="0.8" fill="none"/></svg>
<div class="r" style="left:0px;top:79.8px;width:11.5px;height:10.8px;background:#dadada;"></div>
<div class="r" style="left:2.1px;top:81.9px;width:8px;height:7.3px;background:#ffffff;"></div>
<svg class="r" style="left:0;top:0" width="1024" height="576"><path d="M5.4 85 V87.5 H8" stroke="#444" stroke-width="1.1" fill="none"/></svg>
<div class="r" style="left:2.9px;top:113.5px;width:5.9px;height:6.2px;background:#c6c6c6;"></div>
<div class="r" style="left:2.9px;top:119.7px;width:5.9px;height:405.7px;background:#ffffff;"></div>
<div class="r" style="left:2.9px;top:525.4px;width:5.9px;height:12.5px;background:#c6c6c6;"></div>
<div class="t" style="left:3.1px;top:135.87px;width:7px;height:7px;font-size:5.6px;line-height:7px;text-align:center;color:#555;transform:rotate(-90deg);transform-origin:50% 50%">1</div>
<div class="t" style="left:3.1px;top:156.04px;width:7px;height:7px;font-size:5.6px;line-height:7px;text-align:center;color:#555;transform:rotate(-90deg);transform-origin:50% 50%">2</div>
<div class="t" style="left:3.1px;top:176.21px;width:7px;height:7px;font-size:5.6px;line-height:7px;text-align:center;color:#555;transform:rotate(-90deg);transform-origin:50% 50%">3</div>
<div class="t" style="left:3.1px;top:196.38px;width:7px;height:7px;font-size:5.6px;line-height:7px;text-align:center;color:#555;transform:rotate(-90deg);transform-origin:50% 50%">4</div>
<div class="t" style="left:3.1px;top:216.55px;width:7px;height:7px;font-size:5.6px;line-height:7px;text-align:center;color:#555;transform:rotate(-90deg);transform-origin:50% 50%">5</div>
<div class="t" style="left:3.1px;top:236.72px;width:7px;height:7px;font-size:5.6px;line-height:7px;text-align:center;color:#555;transform:rotate(-90deg);transform-origin:50% 50%">6</div>
<div class="t" style="left:3.1px;top:256.89px;width:7px;height:7px;font-size:5.6px;line-height:7px;text-align:center;color:#555;transform:rotate(-90deg);transform-origin:50% 50%">7</div>
<div class="t" style="left:3.1px;top:277.06px;width:7px;height:7px;font-size:5.6px;line-height:7px;text-align:center;color:#555;transform:rotate(-90deg);transform-origin:50% 50%">8</div>
<div class="t" style="left:3.1px;top:297.23px;width:7px;height:7px;font-size:5.6px;line-height:7px;text-align:center;color:#555;transform:rotate(-90deg);transform-origin:50% 50%">9</div>
<div class="t" style="left:3.1px;top:317.40px;width:7px;height:7px;font-size:5.6px;line-height:7px;text-align:center;color:#555;transform:rotate(-90deg);transform-origin:50% 50%">10</div>
<div class="t" style="left:3.1px;top:337.57px;width:7px;height:7px;font-size:5.6px;line-height:7px;text-align:center;color:#555;transform:rotate(-90deg);transform-origin:50% 50%">11</div>
<div class="t" style="left:3.1px;top:357.74px;width:7px;height:7px;font-size:5.6px;line-height:7px;text-align:center;color:#555;transform:rotate(-90deg);transform-origin:50% 50%">12</div>
<div class="t" style="left:3.1px;top:377.91px;width:7px;height:7px;font-size:5.6px;line-height:7px;text-align:center;color:#555;transform:rotate(-90deg);transform-origin:50% 50%">13</div>
<div class="t" style="left:3.1px;top:398.08px;width:7px;height:7px;font-size:5.6px;line-height:7px;text-align:center;color:#555;transform:rotate(-90deg);transform-origin:50% 50%">14</div>
<div class="t" style="left:3.1px;top:418.25px;width:7px;height:7px;font-size:5.6px;line-height:7px;text-align:center;color:#555;transform:rotate(-90deg);transform-origin:50% 50%">15</div>
<div class="t" style="left:3.1px;top:438.42px;width:7px;height:7px;font-size:5.6px;line-height:7px;text-align:center;color:#555;transform:rotate(-90deg);transform-origin:50% 50%">16</div>
<div class="t" style="left:3.1px;top:458.59px;width:7px;height:7px;font-size:5.6px;line-height:7px;text-align:center;color:#555;transform:rotate(-90deg);transform-origin:50% 50%">17</div>
<div class="t" style="left:3.1px;top:478.76px;width:7px;height:7px;font-size:5.6px;line-height:7px;text-align:center;color:#555;transform:rotate(-90deg);transform-origin:50% 50%">18</div>
<div class="t" style="left:3.1px;top:498.93px;width:7px;height:7px;font-size:5.6px;line-height:7px;text-align:center;color:#555;transform:rotate(-90deg);transform-origin:50% 50%">19</div>
<div class="t" style="left:3.1px;top:519.10px;width:7px;height:7px;font-size:5.6px;line-height:7px;text-align:center;color:#555;transform:rotate(-90deg);transform-origin:50% 50%">20</div>
<div class="r" style="left:6.3px;top:123.44250000000001px;width:0.9px;height:0.8px;background:#9a9a9a;"></div>
<div class="r" style="left:5.2px;top:128.48499999999999px;width:3px;height:0.8px;background:#8a8a8a;"></div>
<div class="r" style="left:6.3px;top:133.5275px;width:0.9px;height:0.8px;background:#9a9a9a;"></div>
<div class="r" style="left:6.3px;top:143.61249999999998px;width:0.9px;height:0.8px;background:#9a9a9a;"></div>
<div class="r" style="left:5.2px;top:148.655px;width:3px;height:0.8px;background:#8a8a8a;"></div>
<div class="r" style="left:6.3px;top:153.6975px;width:0.9px;height:0.8px;background:#9a9a9a;"></div>
<div class="r" style="left:6.3px;top:163.7825px;width:0.9px;height:0.8px;background:#9a9a9a;"></div>
<div class="r" style="left:5.2px;top:168.82500000000002px;width:3px;height:0.8px;background:#8a8a8a;"></div>
<div class="r" style="left:6.3px;top:173.8675px;width:0.9px;height:0.8px;background:#9a9a9a;"></div>
<div class="r" style="left:6.3px;top:183.9525px;width:0.9px;height:0.8px;background:#9a9a9a;"></div>
<div class="r" style="left:5.2px;top:188.995px;width:3px;height:0.8px;background:#8a8a8a;"></div>
<div class="r" style="left:6.3px;top:194.0375px;width:0.9px;height:0.8px;background:#9a9a9a;"></div>
<div class="r" style="left:6.3px;top:204.12249999999997px;width:0.9px;height:0.8px;background:#9a9a9a;"></div>
<div class="r" style="left:5.2px;top:209.165px;width:3px;height:0.8px;background:#8a8a8a;"></div>
<div class="r" style="left:6.3px;top:214.20749999999998px;width:0.9px;height:0.8px;background:#9a9a9a;"></div>
<div class="r" style="left:6.3px;top:224.2925px;width:0.9px;height:0.8px;background:#9a9a9a;"></div>
<div class="r" style="left:5.2px;top:229.335px;width:3px;height:0.8px;background:#8a8a8a;"></div>
<div class="r" style="left:6.3px;top:234.3775px;width:0.9px;height:0.8px;background:#9a9a9a;"></div>
<div class="r" style="left:6.3px;top:244.4625px;width:0.9px;height:0.8px;background:#9a9a9a;"></div>
<div class="r" style="left:5.2px;top:249.50500000000002px;width:3px;height:0.8px;background:#8a8a8a;"></div>
<div class="r" style="left:6.3px;top:254.5475px;width:0.9px;height:0.8px;background:#9a9a9a;"></div>
<div class="r" style="left:6.3px;top:264.6325px;width:0.9px;height:0.8px;background:#9a9a9a;"></div>
<div class="r" style="left:5.2px;top:269.67499999999995px;width:3px;height:0.8px;background:#8a8a8a;"></div>
<div class="r" style="left:6.3px;top:274.7175px;width:0.9px;height:0.8px;background:#9a9a9a;"></div>
<div class="r" style="left:6.3px;top:284.8025px;width:0.9px;height:0.8px;background:#9a9a9a;"></div>
<div class="r" style="left:5.2px;top:289.84499999999997px;width:3px;height:0.8px;background:#8a8a8a;"></div>
<div class="r" style="left:6.3px;top:294.8875px;width:0.9px;height:0.8px;background:#9a9a9a;"></div>
<div class="r" style="left:6.3px;top:304.9725px;width:0.9px;height:0.8px;background:#9a9a9a;"></div>
<div class="r" style="left:5.2px;top:310.015px;width:3px;height:0.8px;background:#8a8a8a;"></div>
<div class="r" style="left:6.3px;top:315.0575px;width:0.9px;height:0.8px;background:#9a9a9a;"></div>
<div class="r" style="left:6.3px;top:325.14250000000004px;width:0.9px;height:0.8px;background:#9a9a9a;"></div>
<div class="r" style="left:5.2px;top:330.185px;width:3px;height:0.8px;background:#8a8a8a;"></div>
<div class="r" style="left:6.3px;top:335.2275px;width:0.9px;height:0.8px;background:#9a9a9a;"></div>
<div class="r" style="left:6.3px;top:345.3125px;width:0.9px;height:0.8px;background:#9a9a9a;"></div>
<div class="r" style="left:5.2px;top:350.35499999999996px;width:3px;height:0.8px;background:#8a8a8a;"></div>
<div class="r" style="left:6.3px;top:355.3975px;width:0.9px;height:0.8px;background:#9a9a9a;"></div>
<div class="r" style="left:6.3px;top:365.4825px;width:0.9px;height:0.8px;background:#9a9a9a;"></div>
<div class="r" style="left:5.2px;top:370.525px;width:3px;height:0.8px;background:#8a8a8a;"></div>
<div class="r" style="left:6.3px;top:375.5675px;width:0.9px;height:0.8px;background:#9a9a9a;"></div>
<div class="r" style="left:6.3px;top:385.65250000000003px;width:0.9px;height:0.8px;background:#9a9a9a;"></div>
<div class="r" style="left:5.2px;top:390.695px;width:3px;height:0.8px;background:#8a8a8a;"></div>
<div class="r" style="left:6.3px;top:395.7375px;width:0.9px;height:0.8px;background:#9a9a9a;"></div>
<div class="r" style="left:6.3px;top:405.8225px;width:0.9px;height:0.8px;background:#9a9a9a;"></div>
<div class="r" style="left:5.2px;top:410.86499999999995px;width:3px;height:0.8px;background:#8a8a8a;"></div>
<div class="r" style="left:6.3px;top:415.90749999999997px;width:0.9px;height:0.8px;background:#9a9a9a;"></div>
<div class="r" style="left:6.3px;top:425.9925px;width:0.9px;height:0.8px;background:#9a9a9a;"></div>
<div class="r" style="left:5.2px;top:431.03499999999997px;width:3px;height:0.8px;background:#8a8a8a;"></div>
<div class="r" style="left:6.3px;top:436.0775px;width:0.9px;height:0.8px;background:#9a9a9a;"></div>
<div class="r" style="left:6.3px;top:446.1625px;width:0.9px;height:0.8px;background:#9a9a9a;"></div>
<div class="r" style="left:5.2px;top:451.205px;width:3px;height:0.8px;background:#8a8a8a;"></div>
<div class="r" style="left:6.3px;top:456.2475px;width:0.9px;height:0.8px;background:#9a9a9a;"></div>
<div class="r" style="left:6.3px;top:466.33250000000004px;width:0.9px;height:0.8px;background:#9a9a9a;"></div>
<div class="r" style="left:5.2px;top:471.375px;width:3px;height:0.8px;background:#8a8a8a;"></div>
<div class="r" style="left:6.3px;top:476.4175px;width:0.9px;height:0.8px;background:#9a9a9a;"></div>
<div class="r" style="left:6.3px;top:486.50250000000005px;width:0.9px;height:0.8px;background:#9a9a9a;"></div>
<div class="r" style="left:5.2px;top:491.545px;width:3px;height:0.8px;background:#8a8a8a;"></div>
<div class="r" style="left:6.3px;top:496.58750000000003px;width:0.9px;height:0.8px;background:#9a9a9a;"></div>
<div class="r" style="left:6.3px;top:506.6725px;width:0.9px;height:0.8px;background:#9a9a9a;"></div>
<div class="r" style="left:5.2px;top:511.715px;width:3px;height:0.8px;background:#8a8a8a;"></div>
<div class="r" style="left:6.3px;top:516.7575px;width:0.9px;height:0.8px;background:#9a9a9a;"></div>
<div class="r" style="left:214.5px;top:92.6px;width:597.7px;height:13.4px;background:#ffffff;border:0;box-shadow:0 0.6px 0 #d4d4d4"></div>
<div class="r" style="left:214.5px;top:114.5px;width:597.7px;height:421.8px;background:#ffffff;box-shadow:0 0.6px 0 #d4d4d4,0 -0.6px 0 #d8d8d8"></div>
<div class="r" style="left:1015px;top:79px;width:9px;height:464px;background:#dadada;"></div>
<div class="r" style="left:1015.4px;top:81.5px;width:8px;height:7px;background:#ffffff;border:0.7px solid #c4c4c4;box-sizing:border-box"></div>
<div class="r" style="left:1015.4px;top:397.5px;width:8px;height:135px;background:#ffffff;border:0.7px solid #c4c4c4;box-sizing:border-box"></div>
<div class="r" style="left:1015.4px;top:534.4px;width:8px;height:6.8px;background:#ffffff;border:0.7px solid #c4c4c4;box-sizing:border-box"></div>
<svg class="r" style="left:0;top:0" width="1024" height="576"><path d="M1017.3 86.4 L1019.4 84.4 L1021.5 86.4Z" fill="#606060"/><path d="M1017.3 536.6 L1019.4 538.6 L1021.5 536.6Z" fill="#606060"/></svg>
<svg class="r" style="left:0;top:0" width="1024" height="576" shape-rendering="geometricPrecision">
<rect x="239.5" y="119.5" width="546.3" height="391.5" fill="#fff" stroke="#d9d9d9" stroke-width="0.8"/>
<path d="M260 477.60 L266.6 472.60 H774" stroke="#d9d9d9" stroke-width="0.8" fill="none"/>
<path d="M260 441.47 L266.6 436.47 H774" stroke="#d9d9d9" stroke-width="0.8" fill="none"/>
<path d="M260 405.34 L266.6 400.34 H774" stroke="#d9d9d9" stroke-width="0.8" fill="none"/>
<path d="M260 369.21 L266.6 364.21 H774" stroke="#d9d9d9" stroke-width="0.8" fill="none"/>
<path d="M260 333.08 L266.6 328.08 H774" stroke="#d9d9d9" stroke-width="0.8" fill="none"/>
<path d="M260 296.95 L266.6 291.95 H774" stroke="#d9d9d9" stroke-width="0.8" fill="none"/>
<path d="M260 260.82 L266.6 255.82 H774" stroke="#d9d9d9" stroke-width="0.8" fill="none"/>
<path d="M260 224.69 L266.6 219.69 H774" stroke="#d9d9d9" stroke-width="0.8" fill="none"/>
<path d="M260 188.56 L266.6 183.56 H774" stroke="#d9d9d9" stroke-width="0.8" fill="none"/>
<path d="M260 152.43 L266.6 147.43 H774" stroke="#d9d9d9" stroke-width="0.8" fill="none"/>
</svg>
<div class="t" style="left:251.63px;top:475.50px;font-size:6.6px;line-height:6.6px;color:#595959;font-weight:normal;font-style:normal;font-family:'Liberation Sans', sans-serif;transform:scaleX(1.0000);">0</div>
<div class="t" style="left:246.13px;top:439.33px;font-size:6.6px;line-height:6.6px;color:#595959;font-weight:normal;font-style:normal;font-family:'Liberation Sans', sans-serif;transform:scaleX(1.0000);">0,1</div>
<div class="t" style="left:246.13px;top:403.16px;font-size:6.6px;line-height:6.6px;color:#595959;font-weight:normal;font-style:normal;font-family:'Liberation Sans', sans-serif;transform:scaleX(1.0000);">0,2</div>
<div class="t" style="left:246.13px;top:366.99px;font-size:6.6px;line-height:6.6px;color:#595959;font-weight:normal;font-style:normal;font-family:'Liberation Sans', sans-serif;transform:scaleX(1.0000);">0,3</div>
<div class="t" style="left:246.13px;top:330.82px;font-size:6.6px;line-height:6.6px;color:#595959;font-weight:normal;font-style:normal;font-family:'Liberation Sans', sans-serif;transform:scaleX(1.0000);">0,4</div>
<div class="t" style="left:246.13px;top:294.65px;font-size:6.6px;line-height:6.6px;color:#595959;font-weight:normal;font-style:normal;font-family:'Liberation Sans', sans-serif;transform:scaleX(1.0000);">0,5</div>
<div class="t" style="left:246.13px;top:258.48px;font-size:6.6px;line-height:6.6px;color:#595959;font-weight:normal;font-style:normal;font-family:'Liberation Sans', sans-serif;transform:scaleX(1.0000);">0,6</div>
<div class="t" style="left:246.13px;top:222.31px;font-size:6.6px;line-height:6.6px;color:#595959;font-weight:normal;font-style:normal;font-family:'Liberation Sans', sans-serif;transform:scaleX(1.0000);">0,7</div>
<div class="t" style="left:246.13px;top:186.14px;font-size:6.6px;line-height:6.6px;color:#595959;font-weight:normal;font-style:normal;font-family:'Liberation Sans', sans-serif;transform:scaleX(1.0000);">0,8</div>
<div class="t" style="left:246.13px;top:149.97px;font-size:6.6px;line-height:6.6px;color:#595959;font-weight:normal;font-style:normal;font-family:'Liberation Sans', sans-serif;transform:scaleX(1.0000);">0,9</div>
<svg class="r" style="left:0;top:0" width="1024" height="576" shape-rendering="geometricPrecision">
<path d="M281.60 234.92 L283.90 233.12 V474.20 L281.60 476.00Z" fill="#66823a"/>
<path d="M274.70 234.92 L277.00 233.12 H283.90 L281.60 234.92Z" fill="#7e9d46"/>
<rect x="274.70" y="234.92" width="6.90" height="241.08" fill="#9bbb59"/>
<path d="M305.77 275.10 L308.07 273.30 V474.20 L305.77 476.00Z" fill="#66823a"/>
<path d="M298.87 275.10 L301.17 273.30 H308.07 L305.77 275.10Z" fill="#7e9d46"/>
<rect x="298.87" y="275.10" width="6.90" height="200.90" fill="#9bbb59"/>
<path d="M323.04 186.72 L325.34 184.92 V474.20 L323.04 476.00Z" fill="#3b669a"/>
<path d="M316.14 186.72 L318.44 184.92 H325.34 L323.04 186.72Z" fill="#3c6aa3"/>
<rect x="316.14" y="186.72" width="6.90" height="289.28" fill="#4f81bd"/>
<path d="M329.94 170.01 L332.24 168.21 V474.20 L329.94 476.00Z" fill="#66823a"/>
<path d="M323.04 170.01 L325.34 168.21 H332.24 L329.94 170.01Z" fill="#7e9d46"/>
<rect x="323.04" y="170.01" width="6.90" height="305.99" fill="#9bbb59"/>
<path d="M347.21 305.83 L349.51 304.03 V474.20 L347.21 476.00Z" fill="#3b669a"/>
<path d="M340.31 305.83 L342.61 304.03 H349.51 L347.21 305.83Z" fill="#3c6aa3"/>
<rect x="340.31" y="305.83" width="6.90" height="170.17" fill="#4f81bd"/>
<path d="M354.11 305.83 L356.41 304.03 V474.20 L354.11 476.00Z" fill="#66823a"/>
<path d="M347.21 305.83 L349.51 304.03 H356.41 L354.11 305.83Z" fill="#7e9d46"/>
<rect x="347.21" y="305.83" width="6.90" height="170.17" fill="#9bbb59"/>
<path d="M371.38 250.00 L373.68 248.20 V474.20 L371.38 476.00Z" fill="#3b669a"/>
<path d="M364.48 250.00 L366.78 248.20 H373.68 L371.38 250.00Z" fill="#3c6aa3"/>
<rect x="364.48" y="250.00" width="6.90" height="226.00" fill="#4f81bd"/>
<path d="M378.28 243.53 L380.58 241.73 V474.20 L378.28 476.00Z" fill="#66823a"/>
<path d="M371.38 243.53 L373.68 241.73 H380.58 L378.28 243.53Z" fill="#7e9d46"/>
<rect x="371.38" y="243.53" width="6.90" height="232.47" fill="#9bbb59"/>
<path d="M395.55 295.20 L397.85 293.40 V474.20 L395.55 476.00Z" fill="#3b669a"/>
<path d="M388.65 295.20 L390.95 293.40 H397.85 L395.55 295.20Z" fill="#3c6aa3"/>
<rect x="388.65" y="295.20" width="6.90" height="180.80" fill="#4f81bd"/>
<path d="M402.45 295.20 L404.75 293.40 V474.20 L402.45 476.00Z" fill="#66823a"/>
<path d="M395.55 295.20 L397.85 293.40 H404.75 L402.45 295.20Z" fill="#7e9d46"/>
<rect x="395.55" y="295.20" width="6.90" height="180.80" fill="#9bbb59"/>
<path d="M419.72 303.81 L422.02 302.01 V474.20 L419.72 476.00Z" fill="#3b669a"/>
<path d="M412.82 303.81 L415.12 302.01 H422.02 L419.72 303.81Z" fill="#3c6aa3"/>
<rect x="412.82" y="303.81" width="6.90" height="172.19" fill="#4f81bd"/>
<path d="M426.62 303.81 L428.92 302.01 V474.20 L426.62 476.00Z" fill="#66823a"/>
<path d="M419.72 303.81 L422.02 302.01 H428.92 L426.62 303.81Z" fill="#7e9d46"/>
<rect x="419.72" y="303.81" width="6.90" height="172.19" fill="#9bbb59"/>
<path d="M443.89 217.71 L446.19 215.91 V474.20 L443.89 476.00Z" fill="#3b669a"/>
<path d="M436.99 217.71 L439.29 215.91 H446.19 L443.89 217.71Z" fill="#3c6aa3"/>
<rect x="436.99" y="217.71" width="6.90" height="258.29" fill="#4f81bd"/>
<path d="M450.79 217.71 L453.09 215.91 V474.20 L450.79 476.00Z" fill="#66823a"/>
<path d="M443.89 217.71 L446.19 215.91 H453.09 L450.79 217.71Z" fill="#7e9d46"/>
<rect x="443.89" y="217.71" width="6.90" height="258.29" fill="#9bbb59"/>
<path d="M468.06 315.30 L470.36 313.50 V474.20 L468.06 476.00Z" fill="#3b669a"/>
<path d="M461.16 315.30 L463.46 313.50 H470.36 L468.06 315.30Z" fill="#3c6aa3"/>
<rect x="461.16" y="315.30" width="6.90" height="160.70" fill="#4f81bd"/>
<path d="M474.96 304.71 L477.26 302.91 V474.20 L474.96 476.00Z" fill="#66823a"/>
<path d="M468.06 304.71 L470.36 302.91 H477.26 L474.96 304.71Z" fill="#7e9d46"/>
<rect x="468.06" y="304.71" width="6.90" height="171.29" fill="#9bbb59"/>
<path d="M492.23 331.36 L494.53 329.56 V474.20 L492.23 476.00Z" fill="#3b669a"/>
<path d="M485.33 331.36 L487.63 329.56 H494.53 L492.23 331.36Z" fill="#3c6aa3"/>
<rect x="485.33" y="331.36" width="6.90" height="144.64" fill="#4f81bd"/>
<path d="M499.13 331.36 L501.43 329.56 V474.20 L499.13 476.00Z" fill="#66823a"/>
<path d="M492.23 331.36 L494.53 329.56 H501.43 L499.13 331.36Z" fill="#7e9d46"/>
<rect x="492.23" y="331.36" width="6.90" height="144.64" fill="#9bbb59"/>
<path d="M516.40 227.40 L518.70 225.60 V474.20 L516.40 476.00Z" fill="#3b669a"/>
<path d="M509.50 227.40 L511.80 225.60 H518.70 L516.40 227.40Z" fill="#3c6aa3"/>
<rect x="509.50" y="227.40" width="6.90" height="248.60" fill="#4f81bd"/>
<path d="M523.30 250.00 L525.60 248.20 V474.20 L523.30 476.00Z" fill="#66823a"/>
<path d="M516.40 250.00 L518.70 248.20 H525.60 L523.30 250.00Z" fill="#7e9d46"/>
<rect x="516.40" y="250.00" width="6.90" height="226.00" fill="#9bbb59"/>
<path d="M540.57 245.88 L542.87 244.08 V474.20 L540.57 476.00Z" fill="#3b669a"/>
<path d="M533.67 245.88 L535.97 244.08 H542.87 L540.57 245.88Z" fill="#3c6aa3"/>
<rect x="533.67" y="245.88" width="6.90" height="230.12" fill="#4f81bd"/>
<path d="M547.47 240.16 L549.77 238.36 V474.20 L547.47 476.00Z" fill="#66823a"/>
<path d="M540.57 240.16 L542.87 238.36 H549.77 L547.47 240.16Z" fill="#7e9d46"/>
<rect x="540.57" y="240.16" width="6.90" height="235.84" fill="#9bbb59"/>
<path d="M564.74 302.43 L567.04 300.63 V474.20 L564.74 476.00Z" fill="#3b669a"/>
<path d="M557.84 302.43 L560.14 300.63 H567.04 L564.74 302.43Z" fill="#3c6aa3"/>
<rect x="557.84" y="302.43" width="6.90" height="173.57" fill="#4f81bd"/>
<path d="M571.64 302.43 L573.94 300.63 V474.20 L571.64 476.00Z" fill="#66823a"/>
<path d="M564.74 302.43 L567.04 300.63 H573.94 L571.64 302.43Z" fill="#7e9d46"/>
<rect x="564.74" y="302.43" width="6.90" height="173.57" fill="#9bbb59"/>
<path d="M588.91 275.10 L591.21 273.30 V474.20 L588.91 476.00Z" fill="#3b669a"/>
<path d="M582.01 275.10 L584.31 273.30 H591.21 L588.91 275.10Z" fill="#3c6aa3"/>
<rect x="582.01" y="275.10" width="6.90" height="200.90" fill="#4f81bd"/>
<path d="M595.81 263.31 L598.11 261.51 V474.20 L595.81 476.00Z" fill="#66823a"/>
<path d="M588.91 263.31 L591.21 261.51 H598.11 L595.81 263.31Z" fill="#7e9d46"/>
<rect x="588.91" y="263.31" width="6.90" height="212.69" fill="#9bbb59"/>
<path d="M613.08 295.20 L615.38 293.40 V474.20 L613.08 476.00Z" fill="#3b669a"/>
<path d="M606.18 295.20 L608.48 293.40 H615.38 L613.08 295.20Z" fill="#3c6aa3"/>
<rect x="606.18" y="295.20" width="6.90" height="180.80" fill="#4f81bd"/>
<path d="M619.98 302.43 L622.28 300.63 V474.20 L619.98 476.00Z" fill="#66823a"/>
<path d="M613.08 302.43 L615.38 300.63 H622.28 L619.98 302.43Z" fill="#7e9d46"/>
<rect x="613.08" y="302.43" width="6.90" height="173.57" fill="#9bbb59"/>
<path d="M637.25 295.20 L639.55 293.40 V474.20 L637.25 476.00Z" fill="#3b669a"/>
<path d="M630.35 295.20 L632.65 293.40 H639.55 L637.25 295.20Z" fill="#3c6aa3"/>
<rect x="630.35" y="295.20" width="6.90" height="180.80" fill="#4f81bd"/>
<path d="M644.15 295.20 L646.45 293.40 V474.20 L644.15 476.00Z" fill="#66823a"/>
<path d="M637.25 295.20 L639.55 293.40 H646.45 L644.15 295.20Z" fill="#7e9d46"/>
<rect x="637.25" y="295.20" width="6.90" height="180.80" fill="#9bbb59"/>
<path d="M661.42 348.39 L663.72 346.59 V474.20 L661.42 476.00Z" fill="#3b669a"/>
<path d="M654.52 348.39 L656.82 346.59 H663.72 L661.42 348.39Z" fill="#3c6aa3"/>
<rect x="654.52" y="348.39" width="6.90" height="127.61" fill="#4f81bd"/>
<path d="M668.32 348.39 L670.62 346.59 V474.20 L668.32 476.00Z" fill="#66823a"/>
<path d="M661.42 348.39 L663.72 346.59 H670.62 L668.32 348.39Z" fill="#7e9d46"/>
<rect x="661.42" y="348.39" width="6.90" height="127.61" fill="#9bbb59"/>
<path d="M685.59 247.61 L687.89 245.81 V474.20 L685.59 476.00Z" fill="#3b669a"/>
<path d="M678.69 247.61 L680.99 245.81 H687.89 L685.59 247.61Z" fill="#3c6aa3"/>
<rect x="678.69" y="247.61" width="6.90" height="228.39" fill="#4f81bd"/>
<path d="M692.49 245.88 L694.79 244.08 V474.20 L692.49 476.00Z" fill="#66823a"/>
<path d="M685.59 245.88 L687.89 244.08 H694.79 L692.49 245.88Z" fill="#7e9d46"/>
<rect x="685.59" y="245.88" width="6.90" height="230.12" fill="#9bbb59"/>
<path d="M709.76 331.36 L712.06 329.56 V474.20 L709.76 476.00Z" fill="#3b669a"/>
<path d="M702.86 331.36 L705.16 329.56 H712.06 L709.76 331.36Z" fill="#3c6aa3"/>
<rect x="702.86" y="331.36" width="6.90" height="144.64" fill="#4f81bd"/>
<path d="M716.66 265.08 L718.96 263.28 V474.20 L716.66 476.00Z" fill="#66823a"/>
<path d="M709.76 265.08 L712.06 263.28 H718.96 L716.66 265.08Z" fill="#7e9d46"/>
<rect x="709.76" y="265.08" width="6.90" height="210.92" fill="#9bbb59"/>
<path d="M733.93 311.65 L736.23 309.85 V474.20 L733.93 476.00Z" fill="#3b669a"/>
<path d="M727.03 311.65 L729.33 309.85 H736.23 L733.93 311.65Z" fill="#3c6aa3"/>
<rect x="727.03" y="311.65" width="6.90" height="164.35" fill="#4f81bd"/>
<path d="M740.83 311.65 L743.13 309.85 V474.20 L740.83 476.00Z" fill="#66823a"/>
<path d="M733.93 311.65 L736.23 309.85 H743.13 L740.83 311.65Z" fill="#7e9d46"/>
<rect x="733.93" y="311.65" width="6.90" height="164.35" fill="#9bbb59"/>
<path d="M758.10 367.52 L760.40 365.72 V474.20 L758.10 476.00Z" fill="#3b669a"/>
<path d="M751.20 367.52 L753.50 365.72 H760.40 L758.10 367.52Z" fill="#3c6aa3"/>
<rect x="751.20" y="367.52" width="6.90" height="108.48" fill="#4f81bd"/>
<path d="M765.00 340.40 L767.30 338.60 V474.20 L765.00 476.00Z" fill="#66823a"/>
<path d="M758.10 340.40 L760.40 338.60 H767.30 L765.00 340.40Z" fill="#7e9d46"/>
<rect x="758.10" y="340.40" width="6.90" height="135.60" fill="#9bbb59"/>
</svg>
<div class="t" style="left:268.75px;top:225.52px;font-size:6.3px;line-height:6.3px;color:#3a3a3a;font-weight:normal;font-style:normal;font-family:'Liberation Sans', sans-serif;transform:scaleX(0.8800);">66,67%</div>
<div class="t" style="left:292.92px;top:265.70px;font-size:6.3px;line-height:6.3px;color:#3a3a3a;font-weight:normal;font-style:normal;font-family:'Liberation Sans', sans-serif;transform:scaleX(0.8800);">55,56%</div>
<div class="t" style="left:314.04px;top:177.32px;font-size:6.3px;line-height:6.3px;color:#3a3a3a;font-weight:normal;font-style:normal;font-family:'Liberation Sans', sans-serif;transform:scaleX(0.8800);">80%</div>
<div class="t" style="left:317.09px;top:160.61px;font-size:6.3px;line-height:6.3px;color:#3a3a3a;font-weight:normal;font-style:normal;font-family:'Liberation Sans', sans-serif;transform:scaleX(0.8800);">84,62%</div>
<div class="t" style="left:334.36px;top:296.43px;font-size:6.3px;line-height:6.3px;color:#3a3a3a;font-weight:normal;font-style:normal;font-family:'Liberation Sans', sans-serif;transform:scaleX(0.8800);">47,06%</div>
<div class="t" style="left:341.26px;top:296.43px;font-size:6.3px;line-height:6.3px;color:#3a3a3a;font-weight:normal;font-style:normal;font-family:'Liberation Sans', sans-serif;transform:scaleX(0.8800);">47,06%</div>
<div class="t" style="left:358.53px;top:240.60px;font-size:6.3px;line-height:6.3px;color:#3a3a3a;font-weight:normal;font-style:normal;font-family:'Liberation Sans', sans-serif;transform:scaleX(0.8800);">62,50%</div>
<div class="t" style="left:365.43px;top:234.13px;font-size:6.3px;line-height:6.3px;color:#3a3a3a;font-weight:normal;font-style:normal;font-family:'Liberation Sans', sans-serif;transform:scaleX(0.8800);">64,29%</div>
<div class="t" style="left:386.55px;top:285.80px;font-size:6.3px;line-height:6.3px;color:#3a3a3a;font-weight:normal;font-style:normal;font-family:'Liberation Sans', sans-serif;transform:scaleX(0.8800);">50%</div>
<div class="t" style="left:393.45px;top:285.80px;font-size:6.3px;line-height:6.3px;color:#3a3a3a;font-weight:normal;font-style:normal;font-family:'Liberation Sans', sans-serif;transform:scaleX(0.8800);">50%</div>
<div class="t" style="left:406.87px;top:294.41px;font-size:6.3px;line-height:6.3px;color:#3a3a3a;font-weight:normal;font-style:normal;font-family:'Liberation Sans', sans-serif;transform:scaleX(0.8800);">47,62%</div>
<div class="t" style="left:413.77px;top:294.41px;font-size:6.3px;line-height:6.3px;color:#3a3a3a;font-weight:normal;font-style:normal;font-family:'Liberation Sans', sans-serif;transform:scaleX(0.8800);">47,62%</div>
<div class="t" style="left:431.04px;top:208.31px;font-size:6.3px;line-height:6.3px;color:#3a3a3a;font-weight:normal;font-style:normal;font-family:'Liberation Sans', sans-serif;transform:scaleX(0.8800);">71,43%</div>
<div class="t" style="left:437.94px;top:208.31px;font-size:6.3px;line-height:6.3px;color:#3a3a3a;font-weight:normal;font-style:normal;font-family:'Liberation Sans', sans-serif;transform:scaleX(0.8800);">71,43%</div>
<div class="t" style="left:455.21px;top:305.90px;font-size:6.3px;line-height:6.3px;color:#3a3a3a;font-weight:normal;font-style:normal;font-family:'Liberation Sans', sans-serif;transform:scaleX(0.8800);">44,44%</div>
<div class="t" style="left:462.11px;top:295.31px;font-size:6.3px;line-height:6.3px;color:#3a3a3a;font-weight:normal;font-style:normal;font-family:'Liberation Sans', sans-serif;transform:scaleX(0.8800);">47,37%</div>
<div class="t" style="left:483.23px;top:321.96px;font-size:6.3px;line-height:6.3px;color:#3a3a3a;font-weight:normal;font-style:normal;font-family:'Liberation Sans', sans-serif;transform:scaleX(0.8800);">40%</div>
<div class="t" style="left:490.13px;top:321.96px;font-size:6.3px;line-height:6.3px;color:#3a3a3a;font-weight:normal;font-style:normal;font-family:'Liberation Sans', sans-serif;transform:scaleX(0.8800);">40%</div>
<div class="t" style="left:503.55px;top:218.00px;font-size:6.3px;line-height:6.3px;color:#3a3a3a;font-weight:normal;font-style:normal;font-family:'Liberation Sans', sans-serif;transform:scaleX(0.8800);">68,75%</div>
<div class="t" style="left:510.45px;top:240.60px;font-size:6.3px;line-height:6.3px;color:#3a3a3a;font-weight:normal;font-style:normal;font-family:'Liberation Sans', sans-serif;transform:scaleX(0.8800);">62,50%</div>
<div class="t" style="left:527.72px;top:236.48px;font-size:6.3px;line-height:6.3px;color:#3a3a3a;font-weight:normal;font-style:normal;font-family:'Liberation Sans', sans-serif;transform:scaleX(0.8800);">63,64%</div>
<div class="t" style="left:534.62px;top:230.76px;font-size:6.3px;line-height:6.3px;color:#3a3a3a;font-weight:normal;font-style:normal;font-family:'Liberation Sans', sans-serif;transform:scaleX(0.8800);">65,22%</div>
<div class="t" style="left:555.74px;top:293.03px;font-size:6.3px;line-height:6.3px;color:#3a3a3a;font-weight:normal;font-style:normal;font-family:'Liberation Sans', sans-serif;transform:scaleX(0.8800);">48%</div>
<div class="t" style="left:562.64px;top:293.03px;font-size:6.3px;line-height:6.3px;color:#3a3a3a;font-weight:normal;font-style:normal;font-family:'Liberation Sans', sans-serif;transform:scaleX(0.8800);">48%</div>
<div class="t" style="left:576.06px;top:265.70px;font-size:6.3px;line-height:6.3px;color:#3a3a3a;font-weight:normal;font-style:normal;font-family:'Liberation Sans', sans-serif;transform:scaleX(0.8800);">55,56%</div>
<div class="t" style="left:582.96px;top:253.91px;font-size:6.3px;line-height:6.3px;color:#3a3a3a;font-weight:normal;font-style:normal;font-family:'Liberation Sans', sans-serif;transform:scaleX(0.8800);">58,82%</div>
<div class="t" style="left:604.08px;top:285.80px;font-size:6.3px;line-height:6.3px;color:#3a3a3a;font-weight:normal;font-style:normal;font-family:'Liberation Sans', sans-serif;transform:scaleX(0.8800);">50%</div>
<div class="t" style="left:610.98px;top:293.03px;font-size:6.3px;line-height:6.3px;color:#3a3a3a;font-weight:normal;font-style:normal;font-family:'Liberation Sans', sans-serif;transform:scaleX(0.8800);">48%</div>
<div class="t" style="left:628.25px;top:285.80px;font-size:6.3px;line-height:6.3px;color:#3a3a3a;font-weight:normal;font-style:normal;font-family:'Liberation Sans', sans-serif;transform:scaleX(0.8800);">50%</div>
<div class="t" style="left:635.15px;top:285.80px;font-size:6.3px;line-height:6.3px;color:#3a3a3a;font-weight:normal;font-style:normal;font-family:'Liberation Sans', sans-serif;transform:scaleX(0.8800);">50%</div>
<div class="t" style="left:648.57px;top:338.99px;font-size:6.3px;line-height:6.3px;color:#3a3a3a;font-weight:normal;font-style:normal;font-family:'Liberation Sans', sans-serif;transform:scaleX(0.8800);">35,29%</div>
<div class="t" style="left:655.47px;top:338.99px;font-size:6.3px;line-height:6.3px;color:#3a3a3a;font-weight:normal;font-style:normal;font-family:'Liberation Sans', sans-serif;transform:scaleX(0.8800);">35,29%</div>
<div class="t" style="left:672.74px;top:238.21px;font-size:6.3px;line-height:6.3px;color:#3a3a3a;font-weight:normal;font-style:normal;font-family:'Liberation Sans', sans-serif;transform:scaleX(0.8800);">63,16%</div>
<div class="t" style="left:679.64px;top:236.48px;font-size:6.3px;line-height:6.3px;color:#3a3a3a;font-weight:normal;font-style:normal;font-family:'Liberation Sans', sans-serif;transform:scaleX(0.8800);">63,64%</div>
<div class="t" style="left:700.76px;top:321.96px;font-size:6.3px;line-height:6.3px;color:#3a3a3a;font-weight:normal;font-style:normal;font-family:'Liberation Sans', sans-serif;transform:scaleX(0.8800);">40%</div>
<div class="t" style="left:703.81px;top:255.68px;font-size:6.3px;line-height:6.3px;color:#3a3a3a;font-weight:normal;font-style:normal;font-family:'Liberation Sans', sans-serif;transform:scaleX(0.8800);">58,33%</div>
<div class="t" style="left:721.08px;top:302.25px;font-size:6.3px;line-height:6.3px;color:#3a3a3a;font-weight:normal;font-style:normal;font-family:'Liberation Sans', sans-serif;transform:scaleX(0.8800);">45,45%</div>
<div class="t" style="left:727.98px;top:302.25px;font-size:6.3px;line-height:6.3px;color:#3a3a3a;font-weight:normal;font-style:normal;font-family:'Liberation Sans', sans-serif;transform:scaleX(0.8800);">45,45%</div>
<div class="t" style="left:749.10px;top:358.12px;font-size:6.3px;line-height:6.3px;color:#3a3a3a;font-weight:normal;font-style:normal;font-family:'Liberation Sans', sans-serif;transform:scaleX(0.8800);">30%</div>
<div class="t" style="left:752.15px;top:331.00px;font-size:6.3px;line-height:6.3px;color:#3a3a3a;font-weight:normal;font-style:normal;font-family:'Liberation Sans', sans-serif;transform:scaleX(0.8800);">37,50%</div>
<div class="t" style="left:265.74px;top:483.40px;font-size:6.3px;line-height:6.3px;color:#595959;font-weight:normal;font-style:normal;font-family:'Liberation Sans', sans-serif;transform:scaleX(1.0000);">2 &quot;А&quot;</div>
<div class="t" style="left:289.94px;top:483.40px;font-size:6.3px;line-height:6.3px;color:#595959;font-weight:normal;font-style:normal;font-family:'Liberation Sans', sans-serif;transform:scaleX(1.0000);">2 &quot;Б&quot;</div>
<div class="t" style="left:314.08px;top:483.40px;font-size:6.3px;line-height:6.3px;color:#595959;font-weight:normal;font-style:normal;font-family:'Liberation Sans', sans-serif;transform:scaleX(1.0000);">3 &quot;А&quot;</div>
<div class="t" style="left:338.28px;top:483.40px;font-size:6.3px;line-height:6.3px;color:#595959;font-weight:normal;font-style:normal;font-family:'Liberation Sans', sans-serif;transform:scaleX(1.0000);">3 &quot;Б&quot;</div>
<div class="t" style="left:362.42px;top:483.40px;font-size:6.3px;line-height:6.3px;color:#595959;font-weight:normal;font-style:normal;font-family:'Liberation Sans', sans-serif;transform:scaleX(1.0000);">3 &quot;В&quot;</div>
<div class="t" style="left:386.59px;top:483.40px;font-size:6.3px;line-height:6.3px;color:#595959;font-weight:normal;font-style:normal;font-family:'Liberation Sans', sans-serif;transform:scaleX(1.0000);">4 &quot;А&quot;</div>
<div class="t" style="left:410.79px;top:483.40px;font-size:6.3px;line-height:6.3px;color:#595959;font-weight:normal;font-style:normal;font-family:'Liberation Sans', sans-serif;transform:scaleX(1.0000);">4 &quot;Б&quot;</div>
<div class="t" style="left:434.93px;top:483.40px;font-size:6.3px;line-height:6.3px;color:#595959;font-weight:normal;font-style:normal;font-family:'Liberation Sans', sans-serif;transform:scaleX(1.0000);">5 &quot;А&quot;</div>
<div class="t" style="left:459.13px;top:483.40px;font-size:6.3px;line-height:6.3px;color:#595959;font-weight:normal;font-style:normal;font-family:'Liberation Sans', sans-serif;transform:scaleX(1.0000);">5 &quot;Б&quot;</div>
<div class="t" style="left:483.27px;top:483.40px;font-size:6.3px;line-height:6.3px;color:#595959;font-weight:normal;font-style:normal;font-family:'Liberation Sans', sans-serif;transform:scaleX(1.0000);">6 &quot;А&quot;</div>
<div class="t" style="left:507.47px;top:483.40px;font-size:6.3px;line-height:6.3px;color:#595959;font-weight:normal;font-style:normal;font-family:'Liberation Sans', sans-serif;transform:scaleX(1.0000);">6 &quot;Б&quot;</div>
<div class="t" style="left:531.61px;top:483.40px;font-size:6.3px;line-height:6.3px;color:#595959;font-weight:normal;font-style:normal;font-family:'Liberation Sans', sans-serif;transform:scaleX(1.0000);">7 &quot;А&quot;</div>
<div class="t" style="left:555.81px;top:483.40px;font-size:6.3px;line-height:6.3px;color:#595959;font-weight:normal;font-style:normal;font-family:'Liberation Sans', sans-serif;transform:scaleX(1.0000);">7 &quot;Б&quot;</div>
<div class="t" style="left:579.95px;top:483.40px;font-size:6.3px;line-height:6.3px;color:#595959;font-weight:normal;font-style:normal;font-family:'Liberation Sans', sans-serif;transform:scaleX(1.0000);">8 &quot;А&quot;</div>
<div class="t" style="left:604.15px;top:483.40px;font-size:6.3px;line-height:6.3px;color:#595959;font-weight:normal;font-style:normal;font-family:'Liberation Sans', sans-serif;transform:scaleX(1.0000);">8 &quot;Б&quot;</div>
<div class="t" style="left:628.29px;top:483.40px;font-size:6.3px;line-height:6.3px;color:#595959;font-weight:normal;font-style:normal;font-family:'Liberation Sans', sans-serif;transform:scaleX(1.0000);">9 &quot;А&quot;</div>
<div class="t" style="left:652.49px;top:483.40px;font-size:6.3px;line-height:6.3px;color:#595959;font-weight:normal;font-style:normal;font-family:'Liberation Sans', sans-serif;transform:scaleX(1.0000);">9 &quot;Б&quot;</div>
<div class="t" style="left:674.87px;top:483.40px;font-size:6.3px;line-height:6.3px;color:#595959;font-weight:normal;font-style:normal;font-family:'Liberation Sans', sans-serif;transform:scaleX(1.0000);">10 &quot;А&quot;</div>
<div class="t" style="left:699.08px;top:483.40px;font-size:6.3px;line-height:6.3px;color:#595959;font-weight:normal;font-style:normal;font-family:'Liberation Sans', sans-serif;transform:scaleX(1.0000);">10 &quot;Б&quot;</div>
<div class="t" style="left:723.45px;top:483.40px;font-size:6.3px;line-height:6.3px;color:#595959;font-weight:normal;font-style:normal;font-family:'Liberation Sans', sans-serif;transform:scaleX(1.0000);">11 &quot;А&quot;</div>
<div class="t" style="left:747.65px;top:483.40px;font-size:6.3px;line-height:6.3px;color:#595959;font-weight:normal;font-style:normal;font-family:'Liberation Sans', sans-serif;transform:scaleX(1.0000);">11 &quot;Б&quot;</div>
<div class="t" style="left:477.60px;top:127.17px;font-size:9px;line-height:9px;color:#595959;font-weight:normal;font-style:normal;font-family:'Liberation Sans', sans-serif;transform:scaleX(1.0018);">Качество знаний</div>
<div class="r" style="left:389.4px;top:499.2px;width:3.5px;height:3.5px;background:#4f81bd;"></div>
<div class="t" style="left:394.10px;top:499.20px;font-size:6.3px;line-height:6.3px;color:#595959;font-weight:normal;font-style:normal;font-family:'Liberation Sans', sans-serif;transform:scaleX(0.9295);">Качество знаний 2020 - 2021 уч.год</div>
<div class="r" style="left:507.9px;top:499.2px;width:3.6px;height:3.5px;background:#9bbb59;"></div>
<div class="t" style="left:512.70px;top:499.20px;font-size:6.3px;line-height:6.3px;color:#595959;font-weight:normal;font-style:normal;font-family:'Liberation Sans', sans-serif;transform:scaleX(0.9180);">Качество знаний 2021 - 2022 уч.год 1 четверть</div>
<div class="t" style="left:3.75px;top:547.10px;font-size:6.6px;line-height:6.6px;color:#444;font-weight:normal;font-style:normal;font-family:'Liberation Sans', sans-serif;transform:scaleX(0.9188);">Страница 4 из 4</div>
<div class="t" style="left:59.10px;top:547.10px;font-size:6.6px;line-height:6.6px;color:#444;font-weight:normal;font-style:normal;font-family:'Liberation Sans', sans-serif;transform:scaleX(0.8799);">Число слов: 477</div>
<div class="t" style="left:130.50px;top:547.10px;font-size:6.6px;line-height:6.6px;color:#444;font-weight:normal;font-style:normal;font-family:'Liberation Sans', sans-serif;transform:scaleX(0.9228);">английский (США)</div>
<div class="t" style="left:1005.00px;top:546.90px;font-size:6.6px;line-height:6.6px;color:#444;font-weight:normal;font-style:normal;font-family:'Liberation Sans', sans-serif;transform:scaleX(0.8590);">100%</div>
<div class="r" style="left:888.8px;top:543.5px;width:19.9px;height:10.5px;background:#cfcfcf;"></div>
<svg class="r" style="left:0;top:0" width="1024" height="576"><path d="M874.6 545.6 H877.9 L878.4 546.2 L878.9 545.6 H881.8 V551 H878.9 L878.4 551.6 L877.9 551 H874.6Z" fill="#e2e2e2" stroke="#8c8c8c" stroke-width="0.7"/><path d="M878.4 546.2 V551.4" stroke="#8c8c8c" stroke-width="0.6"/><rect x="895.3" y="545.3" width="7.2" height="6.4" fill="#9a9a9a" stroke="#6e6e6e" stroke-width="0.6"/><rect x="915.4" y="545.4" width="6.6" height="5.8" fill="#e6e6e6" stroke="#8c8c8c" stroke-width="0.7"/><rect x="915.4" y="545.4" width="1.5" height="5.8" fill="#9a9a9a"/><circle cx="921.2" cy="550.4" r="1.9" fill="#fff" stroke="#666" stroke-width="0.6"/><path d="M113.9 545.6 H117.2 L118 546.4 H121.6 V552 H118 V551.2 H113.9Z" fill="none" stroke="#777" stroke-width="0.6"/><path d="M119.2 547.6 Q120.8 548 119.6 549.1 Q121 549.8 119.2 550.7" fill="none" stroke="#777" stroke-width="0.6"/></svg>
<div class="r" style="left:937.7px;top:548.6px;width:53px;height:0.7px;background:#a0a0a0;"></div>
<div class="r" style="left:963px;top:546px;width:1.6px;height:5.4px;background:#555;"></div>
<svg class="r" style="left:0;top:0" width="1024" height="576"><path d="M932.3 548.9 H934.5 M993.1 548.9 H996.1 M994.6 547.4 V550.4" stroke="#666" stroke-width="0.9"/></svg>
<div class="t" style="left:967.80px;top:558.40px;font-size:6.6px;line-height:6.6px;color:#ffffff;font-weight:normal;font-style:normal;font-family:'Liberation Sans', sans-serif;transform:scaleX(0.8538);">12:54</div>
<div class="t" style="left:960.50px;top:567.60px;font-size:6.6px;line-height:6.6px;color:#ffffff;font-weight:normal;font-style:normal;font-family:'Liberation Sans', sans-serif;transform:scaleX(0.8759);">04.11.2021</div>
<div class="t" style="left:941.40px;top:563.20px;font-size:6.6px;line-height:6.6px;color:#ffffff;font-weight:normal;font-style:normal;font-family:'Liberation Sans', sans-serif;transform:scaleX(0.8635);">ENG</div>
</body></html>
